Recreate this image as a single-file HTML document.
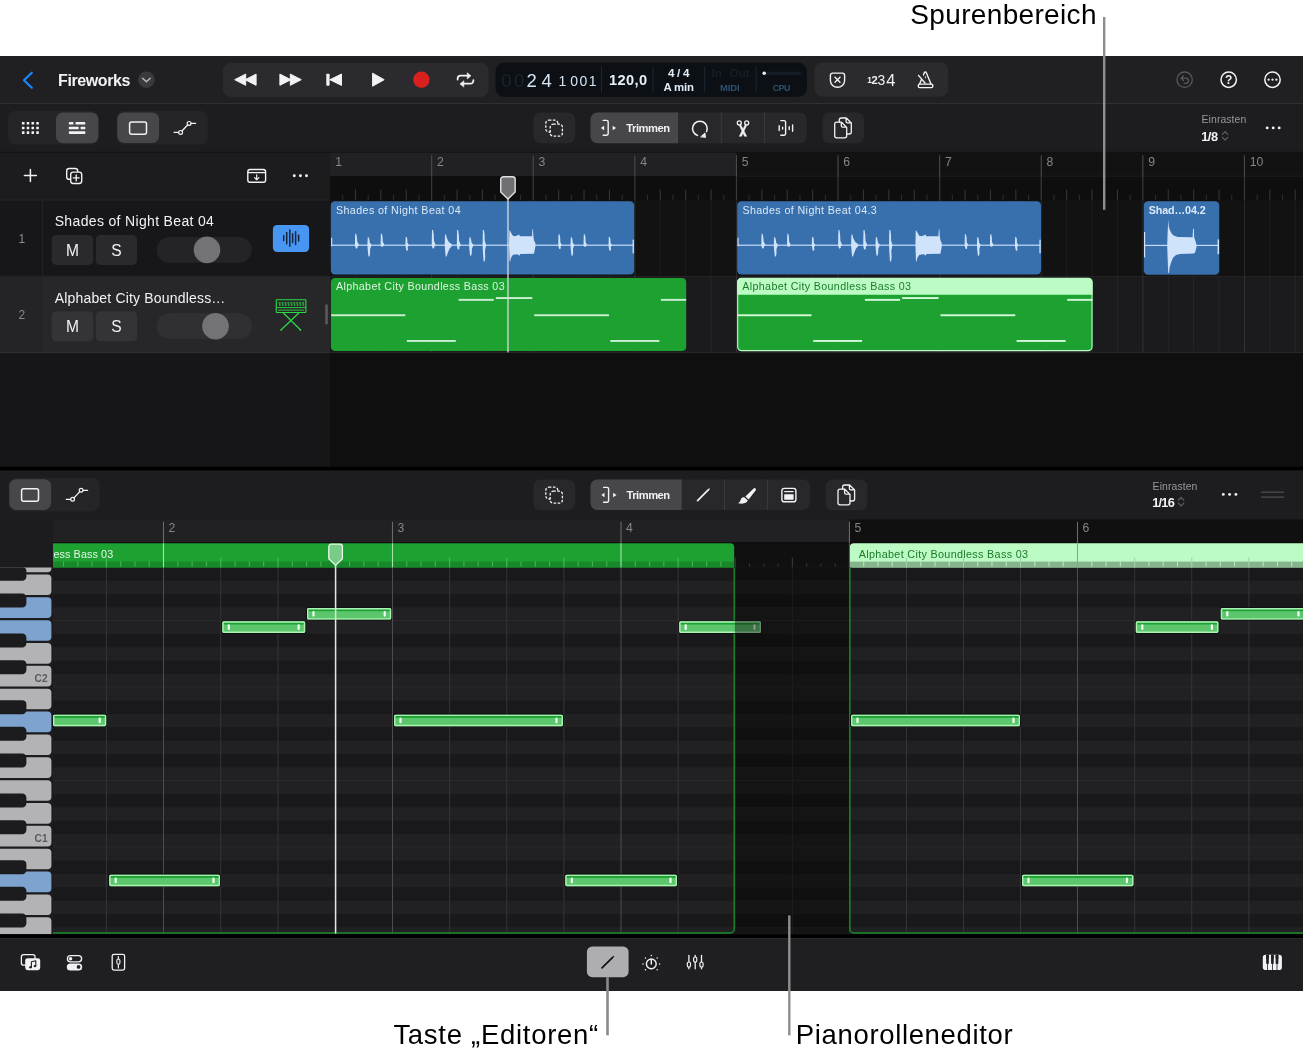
<!DOCTYPE html>
<html lang="de"><head><meta charset="utf-8"><title>Logic Pro – Spurenbereich und Pianorolleneditor</title>
<style>
html,body{margin:0;padding:0;background:#fff;}
body{width:1303px;height:1053px;overflow:hidden;font-family:"Liberation Sans", sans-serif;}
svg{display:block;font-family:"Liberation Sans", sans-serif;will-change:transform;}
text{white-space:pre;}
</style></head><body>
<svg width="1303" height="1053" viewBox="0 0 1303 1053">
<rect x="0.00" y="0.00" width="1303.00" height="1053.00" fill="#ffffff" />
<rect x="0.00" y="56.00" width="1303.00" height="935.00" fill="#1d1d1f" />
<rect x="0.00" y="56.00" width="1303.00" height="47.50" fill="#202023" />
<rect x="0.00" y="103.00" width="1303.00" height="1.00" fill="#303033" />
<text x="910.30" y="23.60" font-size="28" fill="#000" textLength="186.20" lengthAdjust="spacing" >Spurenbereich</text>
<path d="M31.8,72.7 L24.0,80.2 L31.8,87.7" fill="none" stroke="#1a86ff" stroke-width="2.2" stroke-linecap="round" stroke-linejoin="round"/>
<text x="58.00" y="85.50" font-size="16" fill="#f2f2f4" font-weight="700" textLength="72.50" lengthAdjust="spacing" >Fireworks</text>
<circle cx="146.40" cy="79.70" r="8.30" fill="#3a3a3e" />
<path d="M142.6,78.3 L146.4,81.8 L150.2,78.3" fill="none" stroke="#b8b8be" stroke-width="1.5" stroke-linecap="round" stroke-linejoin="round"/>
<rect x="223.00" y="63.00" width="265.50" height="34.00" fill="#2b2b2f" rx="8" />
<path d="M234.70,79.70 L245.70,74.10 L245.70,85.30 Z" fill="#f2f2f4" stroke="#f2f2f4" stroke-width="1" stroke-linejoin="round"/>
<path d="M245.10,79.70 L256.10,74.10 L256.10,85.30 Z" fill="#f2f2f4" stroke="#f2f2f4" stroke-width="1" stroke-linejoin="round"/>
<path d="M290.90,79.70 L279.90,74.10 L279.90,85.30 Z" fill="#f2f2f4" stroke="#f2f2f4" stroke-width="1" stroke-linejoin="round"/>
<path d="M301.30,79.70 L290.30,74.10 L290.30,85.30 Z" fill="#f2f2f4" stroke="#f2f2f4" stroke-width="1" stroke-linejoin="round"/>
<rect x="326.30" y="73.70" width="3.30" height="12.00" fill="#f2f2f4" rx="0.9" />
<path d="M329.90,79.70 L341.50,74.00 L341.50,85.40 Z" fill="#f2f2f4" stroke="#f2f2f4" stroke-width="1" stroke-linejoin="round"/>
<path d="M384.20,79.70 L372.60,73.20 L372.60,86.20 Z" fill="#f2f2f4" stroke="#f2f2f4" stroke-width="1" stroke-linejoin="round"/>
<circle cx="421.40" cy="79.70" r="8.20" fill="#d8201f" />
<path d="M457.6,79.6 v-0.8 a3.1,3.1 0 0 1 3.1,-3.1 h7" fill="none" stroke="#f2f2f4" stroke-width="1.75" stroke-linecap="round" stroke-linejoin="round"/>
<path d="M467.2,72.7 L471.0,75.8 L467.2,78.9 Z" fill="#f2f2f4" stroke="#f2f2f4" stroke-width="0.5" stroke-linejoin="round"/>
<path d="M473.4,80.1 v0.5 a3.1,3.1 0 0 1 -3.1,3.1 h-6.6" fill="none" stroke="#f2f2f4" stroke-width="1.75" stroke-linecap="round" stroke-linejoin="round"/>
<path d="M463.9,80.7 L459.9,83.9 L463.9,87.1 Z" fill="#f2f2f4" stroke="#f2f2f4" stroke-width="0.5" stroke-linejoin="round"/>
<rect x="495.50" y="62.60" width="311.50" height="34.20" fill="#0c1014" rx="9" />
<text x="501.30" y="86.60" font-size="18.5" fill="#1b232c" textLength="23.00" lengthAdjust="spacing" >00</text>
<text x="526.40" y="86.60" font-size="18.5" fill="#d4e4f4" >2</text>
<text x="541.60" y="86.60" font-size="18.5" fill="#d4e4f4" >4</text>
<text x="558.60" y="85.60" font-size="14" fill="#d4e4f4" >1</text>
<text x="570.30" y="85.60" font-size="14" fill="#d4e4f4" textLength="26.20" lengthAdjust="spacing" >001</text>
<rect x="601.00" y="66.50" width="1.00" height="26.00" fill="#1b2732" />
<text x="609.00" y="85.30" font-size="14.6" fill="#e6f0fa" font-weight="700" textLength="38.00" lengthAdjust="spacing" >120,0</text>
<rect x="652.50" y="66.50" width="1.00" height="26.00" fill="#1b2732" />
<text x="678.70" y="77.40" font-size="11.6" fill="#e0ecf8" font-weight="700" text-anchor="middle" textLength="21.60" lengthAdjust="spacing" >4 / 4</text>
<text x="678.70" y="91.30" font-size="11.4" fill="#e0ecf8" font-weight="700" text-anchor="middle" textLength="30.60" lengthAdjust="spacing" >A min</text>
<rect x="704.10" y="66.50" width="1.00" height="26.00" fill="#1b2732" />
<text x="711.60" y="77.40" font-size="11.6" fill="#151e27" font-weight="700" >In</text>
<text x="729.60" y="77.40" font-size="11.6" fill="#151e27" font-weight="700" textLength="20.00" lengthAdjust="spacing" >Out</text>
<text x="729.80" y="91.20" font-size="9.4" fill="#2c506e" font-weight="700" text-anchor="middle" textLength="19.40" lengthAdjust="spacing" >MIDI</text>
<rect x="755.70" y="66.50" width="1.00" height="26.00" fill="#1b2732" />
<rect x="762.30" y="71.70" width="38.80" height="3.20" fill="#161d25" rx="1.6" />
<circle cx="764.20" cy="73.30" r="1.70" fill="#e8f2fc" />
<text x="781.50" y="91.20" font-size="8.8" fill="#2c506e" font-weight="700" text-anchor="middle" textLength="17.60" lengthAdjust="spacing" >CPU</text>
<rect x="814.60" y="62.50" width="133.60" height="34.20" fill="#2b2b2f" rx="8" />
<path d="M832.6,73.1 h9.8 a2.2,2.2 0 0 1 2.2,2.2 v5.4 a7,7 0 0 1 -7.1,6.6 a7,7 0 0 1 -7.1,-6.6 v-5.4 a2.2,2.2 0 0 1 2.2,-2.2 z" fill="none" stroke="#f2f2f4" stroke-width="1.4" />
<path d="M835,77.2 l5,5 M840,77.2 l-5,5" fill="none" stroke="#f2f2f4" stroke-width="1.4" stroke-linecap="round"/>
<text x="867.30" y="82.80" font-size="8.4" fill="#f2f2f4" font-weight="700" >1</text>
<text x="871.50" y="84.00" font-size="11.2" fill="#f2f2f4" font-weight="700" textLength="5.60" lengthAdjust="spacing" >2</text>
<text x="877.40" y="84.90" font-size="13.8" fill="#f2f2f4" textLength="7.90" lengthAdjust="spacing" >3</text>
<text x="886.20" y="85.80" font-size="16.4" fill="#f2f2f4" textLength="9.80" lengthAdjust="spacing" >4</text>
<path d="M919.6,84.1 L924.3,72.7 a1.1,1.1 0 0 1 2,0 L931.0,84.1" fill="none" stroke="#f2f2f4" stroke-width="1.4" stroke-linejoin="round" stroke-linecap="round"/>
<rect x="918.30" y="84.10" width="14.50" height="3.50" fill="none" rx="1.4" stroke="#f2f2f4" stroke-width="1.4" />
<path d="M925.3,76.9 v3.4" fill="none" stroke="#f2f2f4" stroke-width="1.3" stroke-linecap="round"/>
<path d="M919.6,73.8 L926.4,82.2" fill="none" stroke="#2b2b2f" stroke-width="3.6" stroke-linecap="butt"/>
<path d="M918.5,75.4 L925.0,83.0" fill="none" stroke="#f2f2f4" stroke-width="1.4" stroke-linecap="round"/>
<circle cx="1184.60" cy="79.70" r="7.70" fill="none" stroke="#58585c" stroke-width="1.3" />
<path d="M1181.3,78.2 h4.6 a2.6,2.6 0 0 1 0,5.2 h-1.8 M1183.4,75.9 l-2.3,2.3 l2.3,2.3" fill="none" stroke="#58585c" stroke-width="1.3" stroke-linecap="round" stroke-linejoin="round"/>
<circle cx="1228.70" cy="79.70" r="7.70" fill="none" stroke="#f2f2f4" stroke-width="1.5" />
<text x="1228.70" y="84.10" font-size="12" fill="#f2f2f4" font-weight="700" text-anchor="middle" >?</text>
<circle cx="1272.50" cy="79.70" r="7.70" fill="none" stroke="#f2f2f4" stroke-width="1.5" />
<circle cx="1268.60" cy="79.70" r="1.15" fill="#f2f2f4" />
<circle cx="1272.50" cy="79.70" r="1.15" fill="#f2f2f4" />
<circle cx="1276.40" cy="79.70" r="1.15" fill="#f2f2f4" />
<rect x="7.90" y="110.80" width="91.00" height="33.70" fill="#252528" rx="8" />
<rect x="56.00" y="112.40" width="42.30" height="30.80" fill="#47474b" rx="7" />
<rect x="21.90" y="122.00" width="2.60" height="2.60" fill="#f2f2f4" rx="0.4" />
<rect x="26.68" y="122.00" width="2.60" height="2.60" fill="#f2f2f4" rx="0.4" />
<rect x="31.46" y="122.00" width="2.60" height="2.60" fill="#f2f2f4" rx="0.4" />
<rect x="36.24" y="122.00" width="2.60" height="2.60" fill="#f2f2f4" rx="0.4" />
<rect x="21.90" y="126.65" width="2.60" height="2.60" fill="#f2f2f4" rx="0.4" />
<rect x="26.68" y="126.65" width="2.60" height="2.60" fill="#f2f2f4" rx="0.4" />
<rect x="31.46" y="126.65" width="2.60" height="2.60" fill="#f2f2f4" rx="0.4" />
<rect x="36.24" y="126.65" width="2.60" height="2.60" fill="#f2f2f4" rx="0.4" />
<rect x="21.90" y="131.30" width="2.60" height="2.60" fill="#f2f2f4" rx="0.4" />
<rect x="26.68" y="131.30" width="2.60" height="2.60" fill="#f2f2f4" rx="0.4" />
<rect x="31.46" y="131.30" width="2.60" height="2.60" fill="#f2f2f4" rx="0.4" />
<rect x="36.24" y="131.30" width="2.60" height="2.60" fill="#f2f2f4" rx="0.4" />
<rect x="68.80" y="122.00" width="4.70" height="2.60" fill="#f2f2f4" rx="0.9" />
<rect x="75.50" y="122.00" width="9.80" height="2.60" fill="#f2f2f4" rx="0.9" />
<rect x="68.80" y="126.70" width="9.90" height="2.60" fill="#f2f2f4" rx="0.9" />
<rect x="80.60" y="126.70" width="4.70" height="2.60" fill="#f2f2f4" rx="0.9" />
<rect x="68.80" y="131.30" width="16.60" height="2.60" fill="#f2f2f4" rx="0.9" />
<rect x="116.50" y="110.85" width="91.20" height="33.70" fill="#252528" rx="8" />
<rect x="117.30" y="112.40" width="41.80" height="30.60" fill="#47474b" rx="7" />
<rect x="129.60" y="121.90" width="16.90" height="12.40" fill="none" rx="2.0" stroke="#f2f2f4" stroke-width="1.5" />
<path d="M174.2,132.40 H178.6 M182.0,131.00 L187.8,124.70 M191.1,123.40 H195.6" fill="none" stroke="#f2f2f4" stroke-width="1.3" stroke-linecap="round" stroke-linejoin="round"/>
<circle cx="180.60" cy="132.40" r="1.90" fill="none" stroke="#f2f2f4" stroke-width="1.2" />
<circle cx="189.10" cy="123.40" r="1.90" fill="none" stroke="#f2f2f4" stroke-width="1.2" />
<rect x="533.40" y="112.40" width="41.70" height="30.80" fill="#28282b" rx="7" />
<rect x="545.80" y="120.20" width="12.00" height="11.80" fill="none" rx="3" stroke="#f2f2f4" stroke-width="1.3" stroke-dasharray="2.6 1.5"/>
<rect x="550.20" y="124.20" width="12.20" height="12.00" fill="#28282b" rx="3" stroke="#f2f2f4" stroke-width="1.3" stroke-dasharray="2.6 1.5"/>
<rect x="590.50" y="112.40" width="216.30" height="30.80" fill="#28282b" rx="7" />
<path d="M597.5,112.40 H678.10 V143.20 H597.5 a7,7 0 0 1 -7,-7 V119.40 a7,7 0 0 1 7,-7 z" fill="#47474b" />
<path d="M603.20,120.40 h3.4 a1.6,1.6 0 0 1 1.6,1.6 v11.6 a1.6,1.6 0 0 1 -1.6,1.6 h-3.4" fill="none" stroke="#f2f2f4" stroke-width="1.4" stroke-linecap="round" stroke-linejoin="round"/>
<path d="M600.90,128.00 l3.2,-2.2 v4.4 z" fill="#f2f2f4" />
<path d="M616.10,128.00 l-3.4,-2.3 v4.6 z" fill="#f2f2f4" />
<text x="626.30" y="131.80" font-size="11.2" fill="#f2f2f4" font-weight="700" textLength="43.80" lengthAdjust="spacing" >Trimmen</text>
<rect x="720.80" y="112.40" width="1.00" height="30.80" fill="#3a3a3e" />
<rect x="763.90" y="112.40" width="1.00" height="30.80" fill="#3a3a3e" />
<path d="M697.5,135.4 A7.3,7.3 0 1 1 706.5,131.6" fill="none" stroke="#f2f2f4" stroke-width="1.5" stroke-linecap="round" stroke-linejoin="round"/>
<path d="M700.9,136.6 L705.0,132.9 L705.5,137.2 Z" fill="#f2f2f4" stroke="#f2f2f4" stroke-width="0.8" stroke-linecap="round" stroke-linejoin="round"/>
<circle cx="739.30" cy="122.90" r="2.00" fill="none" stroke="#f2f2f4" stroke-width="1.3" />
<circle cx="746.70" cy="122.90" r="2.00" fill="none" stroke="#f2f2f4" stroke-width="1.3" />
<path d="M745.3,124.6 L739.3,136.3 L741.5,136.3 L746.6,125.6 Z" fill="#f2f2f4" stroke="#f2f2f4" stroke-width="0.5" stroke-linecap="round" stroke-linejoin="round"/>
<path d="M740.7,124.6 L746.7,136.3 L744.5,136.3 L739.4,125.6 Z" fill="#f2f2f4" stroke="#f2f2f4" stroke-width="0.5" stroke-linecap="round" stroke-linejoin="round"/>
<path d="M780.8,120.6 h3.2 a1.6,1.6 0 0 1 1.6,1.6 v11.4 a1.6,1.6 0 0 1 -1.6,1.6 h-3.2" fill="none" stroke="#f2f2f4" stroke-width="1.4" stroke-linecap="round" stroke-linejoin="round"/>
<path d="M779.2,125.6 v5 M782.6,127.2 v1.8 M789.2,126.6 v3 M792.6,125 v6.2" fill="none" stroke="#f2f2f4" stroke-width="1.4" stroke-linecap="round" stroke-linejoin="round"/>
<rect x="822.40" y="112.40" width="41.70" height="30.80" fill="#28282b" rx="7" />
<path d="M839.30,122.20 v-2.2 a2,2 0 0 1 2,-2 h5 l5,5 v9 a2,2 0 0 1 -2,2 h-2.4 M846.10,118.20 v3.2 a1.4,1.4 0 0 0 1.4,1.4 h3.4" fill="none" stroke="#f2f2f4" stroke-width="1.3" stroke-linecap="round" stroke-linejoin="round"/>
<path d="M836.70,122.20 h4.8 l5.2,5.2 v8.4 a2,2 0 0 1 -2,2 h-8 a2,2 0 0 1 -2,-2 v-11.6 a2,2 0 0 1 2,-2 z M841.30,122.40 v3.4 a1.4,1.4 0 0 0 1.4,1.4 h3.6" fill="none" stroke="#f2f2f4" stroke-width="1.3" stroke-linecap="round" stroke-linejoin="round"/>
<text x="1201.60" y="123.00" font-size="10.4" fill="#98989d" textLength="44.60" lengthAdjust="spacing" >Einrasten</text>
<text x="1201.20" y="141.10" font-size="12.8" fill="#f2f2f4" font-weight="700" textLength="16.80" lengthAdjust="spacing" >1/8</text>
<path d="M1222.4,134.4 l2.7,-2.7 l2.7,2.7 M1222.4,137.4 l2.7,2.7 l2.7,-2.7" fill="none" stroke="#626267" stroke-width="1.2" stroke-linecap="round" stroke-linejoin="round"/>
<circle cx="1267.20" cy="127.90" r="1.45" fill="#f2f2f4" />
<circle cx="1273.20" cy="127.90" r="1.45" fill="#f2f2f4" />
<circle cx="1279.20" cy="127.90" r="1.45" fill="#f2f2f4" />
<rect x="0.00" y="152.00" width="1303.00" height="315.00" fill="#0f0f10" />
<rect x="0.00" y="152.00" width="330.00" height="48.00" fill="#1c1c1e" />
<rect x="0.00" y="151.80" width="1303.00" height="1.00" fill="#121213" />
<rect x="0.00" y="200.00" width="330.00" height="76.30" fill="#171719" />
<rect x="0.00" y="276.30" width="330.00" height="76.00" fill="#272729" />
<rect x="0.00" y="276.30" width="42.50" height="76.00" fill="#242426" />
<rect x="0.00" y="352.30" width="330.00" height="114.70" fill="#161618" />
<rect x="0.00" y="199.50" width="330.00" height="1.00" fill="#242426" />
<rect x="0.00" y="275.80" width="330.00" height="1.00" fill="#242426" />
<rect x="0.00" y="352.00" width="330.00" height="1.00" fill="#303032" />
<rect x="42.00" y="200.00" width="1.00" height="152.30" fill="#232325" />
<path d="M30.4,169.6 v12.0 M24.4,175.6 h12.0" fill="none" stroke="#f2f2f4" stroke-width="1.5" stroke-linecap="round"/>
<rect x="66.70" y="168.50" width="11.00" height="10.80" fill="none" rx="2.4" stroke="#f2f2f4" stroke-width="1.4" />
<rect x="70.70" y="172.10" width="11.00" height="11.40" fill="#1c1c1e" rx="2.4" stroke="#f2f2f4" stroke-width="1.4" />
<path d="M76.2,175.0 v5.8 M73.3,177.9 h5.8" fill="none" stroke="#f2f2f4" stroke-width="1.4" stroke-linecap="round"/>
<rect x="247.80" y="169.50" width="17.80" height="12.80" fill="none" rx="2.2" stroke="#f2f2f4" stroke-width="1.4" />
<rect x="247.80" y="171.95" width="17.80" height="1.30" fill="#f2f2f4" />
<path d="M256.7,174.8 v4.6 M254.5,177.6 l2.2,2.1 l2.2,-2.1" fill="none" stroke="#f2f2f4" stroke-width="1.2" stroke-linecap="round" stroke-linejoin="round"/>
<circle cx="294.30" cy="175.70" r="1.45" fill="#f2f2f4" />
<circle cx="300.40" cy="175.70" r="1.45" fill="#f2f2f4" />
<circle cx="306.50" cy="175.70" r="1.45" fill="#f2f2f4" />
<text x="21.80" y="242.70" font-size="12" fill="#8a8a8f" text-anchor="middle" >1</text>
<text x="54.70" y="226.30" font-size="14" fill="#f2f2f4" textLength="159.20" lengthAdjust="spacing" >Shades of Night Beat 04</text>
<rect x="51.70" y="234.90" width="41.60" height="30.00" fill="#2a2a2d" rx="4.5" />
<rect x="95.80" y="234.90" width="41.30" height="30.00" fill="#2a2a2d" rx="4.5" />
<text x="72.50" y="255.90" font-size="15.6" fill="#f2f2f4" text-anchor="middle" >M</text>
<text x="116.40" y="255.90" font-size="15.6" fill="#f2f2f4" text-anchor="middle" >S</text>
<rect x="156.60" y="237.00" width="95.20" height="25.80" fill="#242427" rx="12.9" />
<circle cx="207.00" cy="249.90" r="13.30" fill="#737377" />
<text x="21.80" y="319.00" font-size="12" fill="#8a8a8f" text-anchor="middle" >2</text>
<text x="54.70" y="302.60" font-size="14" fill="#f2f2f4" textLength="170.60" lengthAdjust="spacing" >Alphabet City Boundless…</text>
<rect x="51.70" y="311.20" width="41.60" height="30.00" fill="#343437" rx="4.5" />
<rect x="95.80" y="311.20" width="41.30" height="30.00" fill="#343437" rx="4.5" />
<text x="72.50" y="332.20" font-size="15.6" fill="#f2f2f4" text-anchor="middle" >M</text>
<text x="116.40" y="332.20" font-size="15.6" fill="#f2f2f4" text-anchor="middle" >S</text>
<rect x="156.60" y="313.30" width="95.20" height="25.80" fill="#303033" rx="12.9" />
<circle cx="215.50" cy="326.20" r="13.30" fill="#737377" />
<rect x="272.90" y="225.10" width="36.20" height="26.90" fill="#4797f2" rx="4.2" />
<line x1="283.70" y1="235.70" x2="283.70" y2="240.50" stroke="#14243c" stroke-width="1.5" stroke-linecap="round"/>
<line x1="286.70" y1="232.55" x2="286.70" y2="243.65" stroke="#14243c" stroke-width="1.5" stroke-linecap="round"/>
<line x1="289.80" y1="229.90" x2="289.80" y2="246.30" stroke="#14243c" stroke-width="1.5" stroke-linecap="round"/>
<line x1="292.60" y1="233.80" x2="292.60" y2="242.40" stroke="#14243c" stroke-width="1.5" stroke-linecap="round"/>
<line x1="295.60" y1="231.70" x2="295.60" y2="244.50" stroke="#14243c" stroke-width="1.5" stroke-linecap="round"/>
<line x1="298.60" y1="235.30" x2="298.60" y2="240.90" stroke="#14243c" stroke-width="1.5" stroke-linecap="round"/>
<rect x="276.30" y="299.70" width="29.60" height="12.80" fill="none" rx="0.6" stroke="#2adb49" stroke-width="1.1" />
<rect x="276.60" y="307.15" width="29.00" height="0.90" fill="#2adb49" />
<rect x="278.20" y="309.65" width="25.80" height="0.90" fill="#2adb49" />
<rect x="278.60" y="302.30" width="1.90" height="1.30" fill="#2adb49" />
<rect x="281.55" y="302.30" width="1.90" height="1.30" fill="#2adb49" />
<rect x="284.50" y="302.30" width="1.90" height="1.30" fill="#2adb49" />
<rect x="287.45" y="302.30" width="1.90" height="1.30" fill="#2adb49" />
<rect x="290.40" y="302.30" width="1.90" height="1.30" fill="#2adb49" />
<rect x="293.35" y="302.30" width="1.90" height="1.30" fill="#2adb49" />
<rect x="296.30" y="302.30" width="1.90" height="1.30" fill="#2adb49" />
<rect x="299.25" y="302.30" width="1.90" height="1.30" fill="#2adb49" />
<rect x="302.20" y="302.30" width="1.90" height="1.30" fill="#2adb49" />
<rect x="279.00" y="304.30" width="1.60" height="1.40" fill="#2adb49" />
<rect x="281.95" y="304.30" width="1.60" height="1.40" fill="#2adb49" />
<rect x="284.90" y="304.30" width="1.60" height="1.40" fill="#2adb49" />
<rect x="287.85" y="304.30" width="1.60" height="1.40" fill="#2adb49" />
<rect x="290.80" y="304.30" width="1.60" height="1.40" fill="#2adb49" />
<rect x="293.75" y="304.30" width="1.60" height="1.40" fill="#2adb49" />
<rect x="296.70" y="304.30" width="1.60" height="1.40" fill="#2adb49" />
<rect x="299.65" y="304.30" width="1.60" height="1.40" fill="#2adb49" />
<rect x="302.60" y="304.30" width="1.60" height="1.40" fill="#2adb49" />
<path d="M283.6,313.2 L300.4,329.8 M298.6,313.2 L281.2,329.8" fill="none" stroke="#2adb49" stroke-width="1.2" stroke-linecap="round"/>
<circle cx="300.40" cy="329.80" r="0.90" fill="#2adb49" />
<circle cx="281.20" cy="329.80" r="0.90" fill="#2adb49" />
<rect x="325.20" y="304.20" width="2.60" height="20.40" fill="#5a5a5e" rx="1.3" />
<rect x="330.00" y="152.60" width="973.00" height="23.60" fill="#121213" />
<rect x="330.00" y="152.60" width="406.45" height="23.60" fill="#212123" />
<rect x="330.00" y="176.20" width="973.00" height="24.00" fill="#0e0e0f" />
<rect x="736.45" y="175.70" width="566.55" height="1.00" fill="#1f1f21" />
<rect x="330.00" y="200.20" width="973.00" height="76.20" fill="#121213" />
<rect x="330.00" y="276.40" width="973.00" height="76.00" fill="#1b1b1d" />
<rect x="330.00" y="275.90" width="973.00" height="1.00" fill="#232325" />
<rect x="330.00" y="351.90" width="973.00" height="1.00" fill="#2a2a2c" />
<rect x="330.00" y="353.00" width="973.00" height="114.00" fill="#0f0f10" />
<rect x="354.95" y="200.20" width="1.00" height="76.20" fill="#1e1e20" />
<rect x="354.95" y="276.40" width="1.00" height="76.00" fill="#262628" />
<rect x="380.35" y="200.20" width="1.00" height="76.20" fill="#1e1e20" />
<rect x="380.35" y="276.40" width="1.00" height="76.00" fill="#262628" />
<rect x="405.75" y="200.20" width="1.00" height="76.20" fill="#1e1e20" />
<rect x="405.75" y="276.40" width="1.00" height="76.00" fill="#262628" />
<rect x="431.15" y="200.20" width="1.00" height="76.20" fill="#2c2c2e" />
<rect x="431.15" y="276.40" width="1.00" height="76.00" fill="#343436" />
<rect x="456.55" y="200.20" width="1.00" height="76.20" fill="#1e1e20" />
<rect x="456.55" y="276.40" width="1.00" height="76.00" fill="#262628" />
<rect x="481.95" y="200.20" width="1.00" height="76.20" fill="#1e1e20" />
<rect x="481.95" y="276.40" width="1.00" height="76.00" fill="#262628" />
<rect x="507.35" y="200.20" width="1.00" height="76.20" fill="#1e1e20" />
<rect x="507.35" y="276.40" width="1.00" height="76.00" fill="#262628" />
<rect x="532.75" y="200.20" width="1.00" height="76.20" fill="#2c2c2e" />
<rect x="532.75" y="276.40" width="1.00" height="76.00" fill="#343436" />
<rect x="558.15" y="200.20" width="1.00" height="76.20" fill="#1e1e20" />
<rect x="558.15" y="276.40" width="1.00" height="76.00" fill="#262628" />
<rect x="583.55" y="200.20" width="1.00" height="76.20" fill="#1e1e20" />
<rect x="583.55" y="276.40" width="1.00" height="76.00" fill="#262628" />
<rect x="608.95" y="200.20" width="1.00" height="76.20" fill="#1e1e20" />
<rect x="608.95" y="276.40" width="1.00" height="76.00" fill="#262628" />
<rect x="634.35" y="200.20" width="1.00" height="76.20" fill="#2c2c2e" />
<rect x="634.35" y="276.40" width="1.00" height="76.00" fill="#343436" />
<rect x="659.75" y="200.20" width="1.00" height="76.20" fill="#1e1e20" />
<rect x="659.75" y="276.40" width="1.00" height="76.00" fill="#262628" />
<rect x="685.15" y="200.20" width="1.00" height="76.20" fill="#1e1e20" />
<rect x="685.15" y="276.40" width="1.00" height="76.00" fill="#262628" />
<rect x="710.55" y="200.20" width="1.00" height="76.20" fill="#1e1e20" />
<rect x="710.55" y="276.40" width="1.00" height="76.00" fill="#262628" />
<rect x="735.95" y="200.20" width="1.00" height="76.20" fill="#2c2c2e" />
<rect x="735.95" y="276.40" width="1.00" height="76.00" fill="#343436" />
<rect x="761.35" y="200.20" width="1.00" height="76.20" fill="#1e1e20" />
<rect x="761.35" y="276.40" width="1.00" height="76.00" fill="#262628" />
<rect x="786.75" y="200.20" width="1.00" height="76.20" fill="#1e1e20" />
<rect x="786.75" y="276.40" width="1.00" height="76.00" fill="#262628" />
<rect x="812.15" y="200.20" width="1.00" height="76.20" fill="#1e1e20" />
<rect x="812.15" y="276.40" width="1.00" height="76.00" fill="#262628" />
<rect x="837.55" y="200.20" width="1.00" height="76.20" fill="#2c2c2e" />
<rect x="837.55" y="276.40" width="1.00" height="76.00" fill="#343436" />
<rect x="862.95" y="200.20" width="1.00" height="76.20" fill="#1e1e20" />
<rect x="862.95" y="276.40" width="1.00" height="76.00" fill="#262628" />
<rect x="888.35" y="200.20" width="1.00" height="76.20" fill="#1e1e20" />
<rect x="888.35" y="276.40" width="1.00" height="76.00" fill="#262628" />
<rect x="913.75" y="200.20" width="1.00" height="76.20" fill="#1e1e20" />
<rect x="913.75" y="276.40" width="1.00" height="76.00" fill="#262628" />
<rect x="939.15" y="200.20" width="1.00" height="76.20" fill="#2c2c2e" />
<rect x="939.15" y="276.40" width="1.00" height="76.00" fill="#343436" />
<rect x="964.55" y="200.20" width="1.00" height="76.20" fill="#1e1e20" />
<rect x="964.55" y="276.40" width="1.00" height="76.00" fill="#262628" />
<rect x="989.95" y="200.20" width="1.00" height="76.20" fill="#1e1e20" />
<rect x="989.95" y="276.40" width="1.00" height="76.00" fill="#262628" />
<rect x="1015.35" y="200.20" width="1.00" height="76.20" fill="#1e1e20" />
<rect x="1015.35" y="276.40" width="1.00" height="76.00" fill="#262628" />
<rect x="1040.75" y="200.20" width="1.00" height="76.20" fill="#2c2c2e" />
<rect x="1040.75" y="276.40" width="1.00" height="76.00" fill="#343436" />
<rect x="1066.15" y="200.20" width="1.00" height="76.20" fill="#1e1e20" />
<rect x="1066.15" y="276.40" width="1.00" height="76.00" fill="#262628" />
<rect x="1091.55" y="200.20" width="1.00" height="76.20" fill="#1e1e20" />
<rect x="1091.55" y="276.40" width="1.00" height="76.00" fill="#262628" />
<rect x="1116.95" y="200.20" width="1.00" height="76.20" fill="#1e1e20" />
<rect x="1116.95" y="276.40" width="1.00" height="76.00" fill="#262628" />
<rect x="1142.35" y="200.20" width="1.00" height="76.20" fill="#2c2c2e" />
<rect x="1142.35" y="276.40" width="1.00" height="76.00" fill="#343436" />
<rect x="1167.75" y="200.20" width="1.00" height="76.20" fill="#1e1e20" />
<rect x="1167.75" y="276.40" width="1.00" height="76.00" fill="#262628" />
<rect x="1193.15" y="200.20" width="1.00" height="76.20" fill="#1e1e20" />
<rect x="1193.15" y="276.40" width="1.00" height="76.00" fill="#262628" />
<rect x="1218.55" y="200.20" width="1.00" height="76.20" fill="#1e1e20" />
<rect x="1218.55" y="276.40" width="1.00" height="76.00" fill="#262628" />
<rect x="1243.95" y="200.20" width="1.00" height="76.20" fill="#2c2c2e" />
<rect x="1243.95" y="276.40" width="1.00" height="76.00" fill="#343436" />
<rect x="1269.35" y="200.20" width="1.00" height="76.20" fill="#1e1e20" />
<rect x="1269.35" y="276.40" width="1.00" height="76.00" fill="#262628" />
<rect x="1294.75" y="200.20" width="1.00" height="76.20" fill="#1e1e20" />
<rect x="1294.75" y="276.40" width="1.00" height="76.00" fill="#262628" />
<rect x="342.20" y="194.80" width="1.10" height="5.20" fill="#2b2b2e" />
<rect x="354.90" y="189.60" width="1.10" height="10.40" fill="#343437" />
<rect x="367.60" y="194.80" width="1.10" height="5.20" fill="#2b2b2e" />
<rect x="380.30" y="189.60" width="1.10" height="10.40" fill="#343437" />
<rect x="393.00" y="194.80" width="1.10" height="5.20" fill="#2b2b2e" />
<rect x="405.70" y="189.60" width="1.10" height="10.40" fill="#343437" />
<rect x="418.40" y="194.80" width="1.10" height="5.20" fill="#2b2b2e" />
<text x="335.35" y="165.60" font-size="12.2" fill="#85858a" >1</text>
<rect x="431.10" y="155.20" width="1.10" height="21.00" fill="#4a4a4e" />
<rect x="431.05" y="176.20" width="1.20" height="23.80" fill="#3a3a3d" />
<rect x="443.80" y="194.80" width="1.10" height="5.20" fill="#2b2b2e" />
<rect x="456.50" y="189.60" width="1.10" height="10.40" fill="#343437" />
<rect x="469.20" y="194.80" width="1.10" height="5.20" fill="#2b2b2e" />
<rect x="481.90" y="189.60" width="1.10" height="10.40" fill="#343437" />
<rect x="494.60" y="194.80" width="1.10" height="5.20" fill="#2b2b2e" />
<rect x="507.30" y="189.60" width="1.10" height="10.40" fill="#343437" />
<rect x="520.00" y="194.80" width="1.10" height="5.20" fill="#2b2b2e" />
<text x="436.95" y="165.60" font-size="12.2" fill="#85858a" >2</text>
<rect x="532.70" y="155.20" width="1.10" height="21.00" fill="#4a4a4e" />
<rect x="532.65" y="176.20" width="1.20" height="23.80" fill="#3a3a3d" />
<rect x="545.40" y="194.80" width="1.10" height="5.20" fill="#2b2b2e" />
<rect x="558.10" y="189.60" width="1.10" height="10.40" fill="#343437" />
<rect x="570.80" y="194.80" width="1.10" height="5.20" fill="#2b2b2e" />
<rect x="583.50" y="189.60" width="1.10" height="10.40" fill="#343437" />
<rect x="596.20" y="194.80" width="1.10" height="5.20" fill="#2b2b2e" />
<rect x="608.90" y="189.60" width="1.10" height="10.40" fill="#343437" />
<rect x="621.60" y="194.80" width="1.10" height="5.20" fill="#2b2b2e" />
<text x="538.55" y="165.60" font-size="12.2" fill="#85858a" >3</text>
<rect x="634.30" y="155.20" width="1.10" height="21.00" fill="#4a4a4e" />
<rect x="634.25" y="176.20" width="1.20" height="23.80" fill="#3a3a3d" />
<rect x="647.00" y="194.80" width="1.10" height="5.20" fill="#2b2b2e" />
<rect x="659.70" y="189.60" width="1.10" height="10.40" fill="#343437" />
<rect x="672.40" y="194.80" width="1.10" height="5.20" fill="#2b2b2e" />
<rect x="685.10" y="189.60" width="1.10" height="10.40" fill="#343437" />
<rect x="697.80" y="194.80" width="1.10" height="5.20" fill="#2b2b2e" />
<rect x="710.50" y="189.60" width="1.10" height="10.40" fill="#343437" />
<rect x="723.20" y="194.80" width="1.10" height="5.20" fill="#2b2b2e" />
<text x="640.15" y="165.60" font-size="12.2" fill="#85858a" >4</text>
<rect x="735.90" y="155.20" width="1.10" height="21.00" fill="#4a4a4e" />
<rect x="735.85" y="176.20" width="1.20" height="23.80" fill="#3a3a3d" />
<rect x="748.60" y="194.80" width="1.10" height="5.20" fill="#2b2b2e" />
<rect x="761.30" y="189.60" width="1.10" height="10.40" fill="#343437" />
<rect x="774.00" y="194.80" width="1.10" height="5.20" fill="#2b2b2e" />
<rect x="786.70" y="189.60" width="1.10" height="10.40" fill="#343437" />
<rect x="799.40" y="194.80" width="1.10" height="5.20" fill="#2b2b2e" />
<rect x="812.10" y="189.60" width="1.10" height="10.40" fill="#343437" />
<rect x="824.80" y="194.80" width="1.10" height="5.20" fill="#2b2b2e" />
<text x="741.75" y="165.60" font-size="12.2" fill="#85858a" >5</text>
<rect x="837.50" y="155.20" width="1.10" height="21.00" fill="#4a4a4e" />
<rect x="837.45" y="176.20" width="1.20" height="23.80" fill="#3a3a3d" />
<rect x="850.20" y="194.80" width="1.10" height="5.20" fill="#2b2b2e" />
<rect x="862.90" y="189.60" width="1.10" height="10.40" fill="#343437" />
<rect x="875.60" y="194.80" width="1.10" height="5.20" fill="#2b2b2e" />
<rect x="888.30" y="189.60" width="1.10" height="10.40" fill="#343437" />
<rect x="901.00" y="194.80" width="1.10" height="5.20" fill="#2b2b2e" />
<rect x="913.70" y="189.60" width="1.10" height="10.40" fill="#343437" />
<rect x="926.40" y="194.80" width="1.10" height="5.20" fill="#2b2b2e" />
<text x="843.35" y="165.60" font-size="12.2" fill="#85858a" >6</text>
<rect x="939.10" y="155.20" width="1.10" height="21.00" fill="#4a4a4e" />
<rect x="939.05" y="176.20" width="1.20" height="23.80" fill="#3a3a3d" />
<rect x="951.80" y="194.80" width="1.10" height="5.20" fill="#2b2b2e" />
<rect x="964.50" y="189.60" width="1.10" height="10.40" fill="#343437" />
<rect x="977.20" y="194.80" width="1.10" height="5.20" fill="#2b2b2e" />
<rect x="989.90" y="189.60" width="1.10" height="10.40" fill="#343437" />
<rect x="1002.60" y="194.80" width="1.10" height="5.20" fill="#2b2b2e" />
<rect x="1015.30" y="189.60" width="1.10" height="10.40" fill="#343437" />
<rect x="1028.00" y="194.80" width="1.10" height="5.20" fill="#2b2b2e" />
<text x="944.95" y="165.60" font-size="12.2" fill="#85858a" >7</text>
<rect x="1040.70" y="155.20" width="1.10" height="21.00" fill="#4a4a4e" />
<rect x="1040.65" y="176.20" width="1.20" height="23.80" fill="#3a3a3d" />
<rect x="1053.40" y="194.80" width="1.10" height="5.20" fill="#2b2b2e" />
<rect x="1066.10" y="189.60" width="1.10" height="10.40" fill="#343437" />
<rect x="1078.80" y="194.80" width="1.10" height="5.20" fill="#2b2b2e" />
<rect x="1091.50" y="189.60" width="1.10" height="10.40" fill="#343437" />
<rect x="1104.20" y="194.80" width="1.10" height="5.20" fill="#2b2b2e" />
<rect x="1116.90" y="189.60" width="1.10" height="10.40" fill="#343437" />
<rect x="1129.60" y="194.80" width="1.10" height="5.20" fill="#2b2b2e" />
<text x="1046.55" y="165.60" font-size="12.2" fill="#85858a" >8</text>
<rect x="1142.30" y="155.20" width="1.10" height="21.00" fill="#4a4a4e" />
<rect x="1142.25" y="176.20" width="1.20" height="23.80" fill="#3a3a3d" />
<rect x="1155.00" y="194.80" width="1.10" height="5.20" fill="#2b2b2e" />
<rect x="1167.70" y="189.60" width="1.10" height="10.40" fill="#343437" />
<rect x="1180.40" y="194.80" width="1.10" height="5.20" fill="#2b2b2e" />
<rect x="1193.10" y="189.60" width="1.10" height="10.40" fill="#343437" />
<rect x="1205.80" y="194.80" width="1.10" height="5.20" fill="#2b2b2e" />
<rect x="1218.50" y="189.60" width="1.10" height="10.40" fill="#343437" />
<rect x="1231.20" y="194.80" width="1.10" height="5.20" fill="#2b2b2e" />
<text x="1148.15" y="165.60" font-size="12.2" fill="#85858a" >9</text>
<rect x="1243.90" y="155.20" width="1.10" height="21.00" fill="#4a4a4e" />
<rect x="1243.85" y="176.20" width="1.20" height="23.80" fill="#3a3a3d" />
<rect x="1256.60" y="194.80" width="1.10" height="5.20" fill="#2b2b2e" />
<rect x="1269.30" y="189.60" width="1.10" height="10.40" fill="#343437" />
<rect x="1282.00" y="194.80" width="1.10" height="5.20" fill="#2b2b2e" />
<rect x="1294.70" y="189.60" width="1.10" height="10.40" fill="#343437" />
<text x="1249.75" y="165.60" font-size="12.2" fill="#85858a" >10</text>
<rect x="330.80" y="201.20" width="303.40" height="73.20" fill="#3870ad" rx="4.2" />
<text x="336.00" y="214.10" font-size="10.7" fill="#dbe8f7" textLength="124.60" lengthAdjust="spacing" >Shades of Night Beat 04</text>
<rect x="331.10" y="244.65" width="302.80" height="1.10" fill="#cfe3fb" />
<rect x="331.10" y="237.70" width="1.10" height="8.60" fill="#cfe3fb" />
<rect x="632.60" y="239.70" width="1.30" height="13.60" fill="#cfe3fb" />
<path d="M354.90,245.20 L355.20,233.70 L356.20,233.70 L356.90,237.15 L357.30,241.75 L358.90,244.60 L358.90,245.80 L357.62,246.22 L357.50,247.76 L356.90,248.40 L355.90,248.40 L355.30,246.80 Z" fill="#cfe3fb" />
<path d="M367.40,245.20 L367.70,237.30 L368.70,237.30 L369.40,239.67 L369.80,242.83 L371.40,244.60 L371.40,245.80 L370.12,248.82 L370.00,254.24 L369.40,256.50 L368.40,256.50 L367.80,250.85 Z" fill="#cfe3fb" />
<path d="M380.60,245.20 L380.90,233.70 L381.90,233.70 L382.60,237.15 L382.80,241.75 L384.20,244.60 L384.20,245.80 L383.08,245.68 L383.20,246.40 L382.60,246.70 L381.60,246.70 L381.00,245.95 Z" fill="#cfe3fb" />
<path d="M405.40,245.20 L405.70,236.90 L406.70,236.90 L407.40,239.39 L407.40,242.71 L408.60,244.60 L408.60,245.80 L407.64,246.99 L408.00,249.68 L407.40,250.80 L406.40,250.80 L405.80,248.00 Z" fill="#cfe3fb" />
<path d="M431.70,245.20 L432.00,230.00 L433.00,230.00 L433.70,234.56 L434.00,240.64 L435.50,244.60 L435.50,245.80 L434.30,246.22 L434.30,247.76 L433.70,248.40 L432.70,248.40 L432.10,246.80 Z" fill="#cfe3fb" />
<path d="M444.70,245.20 L445.00,234.40 L446.00,234.40 L446.70,237.64 L448.80,241.96 L452.10,244.60 L452.10,245.80 L449.46,248.82 L447.30,254.24 L446.70,256.50 L445.70,256.50 L445.10,250.85 Z" fill="#cfe3fb" />
<path d="M456.80,245.20 L457.10,230.00 L458.10,230.00 L458.80,234.56 L459.10,240.64 L460.60,244.60 L460.60,245.80 L459.40,246.61 L459.40,248.72 L458.80,249.60 L457.80,249.60 L457.20,247.40 Z" fill="#cfe3fb" />
<path d="M469.10,245.20 L469.40,237.30 L470.40,237.30 L471.10,239.67 L471.60,242.83 L473.30,244.60 L473.30,245.80 L471.94,248.59 L471.70,253.68 L471.10,255.80 L470.10,255.80 L469.50,250.50 Z" fill="#cfe3fb" />
<path d="M482.60,245.20 L482.90,230.00 L483.90,230.00 L484.60,234.56 L484.70,240.64 L486.00,244.60 L486.00,245.80 L484.96,250.38 L485.20,258.16 L484.60,261.40 L483.60,261.40 L483.00,253.30 Z" fill="#cfe3fb" />
<path d="M558.20,245.20 L558.50,234.20 L559.50,234.20 L560.20,237.50 L560.30,241.90 L561.60,244.60 L561.60,245.80 L560.56,246.38 L560.80,248.16 L560.20,248.90 L559.20,248.90 L558.60,247.05 Z" fill="#cfe3fb" />
<path d="M570.50,245.20 L570.80,237.30 L571.80,237.30 L572.50,239.67 L572.70,242.83 L574.10,244.60 L574.10,245.80 L572.98,248.59 L573.10,253.68 L572.50,255.80 L571.50,255.80 L570.90,250.50 Z" fill="#cfe3fb" />
<path d="M583.50,245.20 L583.80,234.20 L584.80,234.20 L585.50,237.50 L585.60,241.90 L586.90,244.60 L586.90,245.80 L585.86,245.68 L586.10,246.40 L585.50,246.70 L584.50,246.70 L583.90,245.95 Z" fill="#cfe3fb" />
<path d="M608.50,245.20 L608.80,236.90 L609.80,236.90 L610.50,239.39 L610.50,242.71 L611.70,244.60 L611.70,245.80 L610.74,246.99 L611.10,249.68 L610.50,250.80 L609.50,250.80 L608.90,248.00 Z" fill="#cfe3fb" />
<path d="M509.00,245.20 L509.40,230.00 L510.40,231.60 L512.80,235.80 L515.40,236.20 L519.20,234.60 L519.80,236.20 L532.00,236.20 L532.40,229.20 L533.00,229.20 L533.40,236.20 L534.00,240.20 L535.40,243.20 L535.40,246.60 L534.00,253.80 L520.00,254.00 L519.40,255.80 L517.40,254.20 L513.00,254.80 L511.00,257.80 L510.20,261.40 L509.60,261.40 Z" fill="#cfe3fb" />
<rect x="737.20" y="201.20" width="303.80" height="73.20" fill="#3870ad" rx="4.2" />
<text x="742.40" y="214.10" font-size="10.7" fill="#dbe8f7" textLength="134.40" lengthAdjust="spacing" >Shades of Night Beat 04.3</text>
<rect x="737.50" y="244.65" width="303.20" height="1.10" fill="#cfe3fb" />
<rect x="737.50" y="237.70" width="1.10" height="8.60" fill="#cfe3fb" />
<rect x="1039.40" y="239.70" width="1.30" height="13.60" fill="#cfe3fb" />
<path d="M761.30,245.20 L761.60,233.70 L762.60,233.70 L763.30,237.15 L763.70,241.75 L765.30,244.60 L765.30,245.80 L764.02,246.22 L763.90,247.76 L763.30,248.40 L762.30,248.40 L761.70,246.80 Z" fill="#cfe3fb" />
<path d="M773.80,245.20 L774.10,237.30 L775.10,237.30 L775.80,239.67 L776.20,242.83 L777.80,244.60 L777.80,245.80 L776.52,248.82 L776.40,254.24 L775.80,256.50 L774.80,256.50 L774.20,250.85 Z" fill="#cfe3fb" />
<path d="M787.00,245.20 L787.30,233.70 L788.30,233.70 L789.00,237.15 L789.20,241.75 L790.60,244.60 L790.60,245.80 L789.48,245.68 L789.60,246.40 L789.00,246.70 L788.00,246.70 L787.40,245.95 Z" fill="#cfe3fb" />
<path d="M811.80,245.20 L812.10,236.90 L813.10,236.90 L813.80,239.39 L813.80,242.71 L815.00,244.60 L815.00,245.80 L814.04,246.99 L814.40,249.68 L813.80,250.80 L812.80,250.80 L812.20,248.00 Z" fill="#cfe3fb" />
<path d="M838.10,245.20 L838.40,230.00 L839.40,230.00 L840.10,234.56 L840.40,240.64 L841.90,244.60 L841.90,245.80 L840.70,246.22 L840.70,247.76 L840.10,248.40 L839.10,248.40 L838.50,246.80 Z" fill="#cfe3fb" />
<path d="M851.10,245.20 L851.40,234.40 L852.40,234.40 L853.10,237.64 L855.20,241.96 L858.50,244.60 L858.50,245.80 L855.86,248.82 L853.70,254.24 L853.10,256.50 L852.10,256.50 L851.50,250.85 Z" fill="#cfe3fb" />
<path d="M863.20,245.20 L863.50,230.00 L864.50,230.00 L865.20,234.56 L865.50,240.64 L867.00,244.60 L867.00,245.80 L865.80,246.61 L865.80,248.72 L865.20,249.60 L864.20,249.60 L863.60,247.40 Z" fill="#cfe3fb" />
<path d="M875.50,245.20 L875.80,237.30 L876.80,237.30 L877.50,239.67 L878.00,242.83 L879.70,244.60 L879.70,245.80 L878.34,248.59 L878.10,253.68 L877.50,255.80 L876.50,255.80 L875.90,250.50 Z" fill="#cfe3fb" />
<path d="M889.00,245.20 L889.30,230.00 L890.30,230.00 L891.00,234.56 L891.10,240.64 L892.40,244.60 L892.40,245.80 L891.36,250.38 L891.60,258.16 L891.00,261.40 L890.00,261.40 L889.40,253.30 Z" fill="#cfe3fb" />
<path d="M964.60,245.20 L964.90,234.20 L965.90,234.20 L966.60,237.50 L966.70,241.90 L968.00,244.60 L968.00,245.80 L966.96,246.38 L967.20,248.16 L966.60,248.90 L965.60,248.90 L965.00,247.05 Z" fill="#cfe3fb" />
<path d="M976.90,245.20 L977.20,237.30 L978.20,237.30 L978.90,239.67 L979.10,242.83 L980.50,244.60 L980.50,245.80 L979.38,248.59 L979.50,253.68 L978.90,255.80 L977.90,255.80 L977.30,250.50 Z" fill="#cfe3fb" />
<path d="M989.90,245.20 L990.20,234.20 L991.20,234.20 L991.90,237.50 L992.00,241.90 L993.30,244.60 L993.30,245.80 L992.26,245.68 L992.50,246.40 L991.90,246.70 L990.90,246.70 L990.30,245.95 Z" fill="#cfe3fb" />
<path d="M1014.90,245.20 L1015.20,236.90 L1016.20,236.90 L1016.90,239.39 L1016.90,242.71 L1018.10,244.60 L1018.10,245.80 L1017.14,246.99 L1017.50,249.68 L1016.90,250.80 L1015.90,250.80 L1015.30,248.00 Z" fill="#cfe3fb" />
<path d="M915.40,245.20 L915.80,230.00 L916.80,231.60 L919.20,235.80 L921.80,236.20 L925.60,234.60 L926.20,236.20 L938.40,236.20 L938.80,229.20 L939.40,229.20 L939.80,236.20 L940.40,240.20 L941.80,243.20 L941.80,246.60 L940.40,253.80 L926.40,254.00 L925.80,255.80 L923.80,254.20 L919.40,254.80 L917.40,257.80 L916.60,261.40 L916.00,261.40 Z" fill="#cfe3fb" />
<rect x="1143.80" y="201.20" width="75.40" height="73.60" fill="#3870ad" rx="4.2" />
<text x="1148.80" y="214.20" font-size="10.7" fill="#dbe8f7" font-weight="700" textLength="56.80" lengthAdjust="spacing" >Shad…04.2</text>
<rect x="1144.20" y="244.85" width="74.80" height="1.10" fill="#cfe3fb" />
<rect x="1144.00" y="232.00" width="1.20" height="25.40" fill="#cfe3fb" />
<rect x="1217.60" y="239.40" width="1.50" height="14.80" fill="#cfe3fb" />
<path d="M1167.20,245.40 L1167.60,233.40 L1168.20,219.40 L1168.80,226.40 L1170.00,230.40 L1172.00,234.00 L1174.00,235.80 L1178.00,237.00 L1192.60,237.20 L1193.00,228.80 L1193.80,228.80 L1194.20,237.40 L1195.60,241.40 L1196.40,244.40 L1196.40,247.40 L1195.00,252.80 L1193.60,253.60 L1180.00,254.00 L1176.00,255.00 L1173.00,257.80 L1171.00,262.80 L1169.60,267.40 L1169.00,273.00 L1168.20,273.00 L1167.60,257.40 Z" fill="#cfe3fb" />
<rect x="330.90" y="277.90" width="355.30" height="73.20" fill="#1da131" rx="4.2" />
<text x="336.00" y="290.00" font-size="10.7" fill="#dff5e2" textLength="168.60" lengthAdjust="spacing" >Alphabet City Boundless Bass 03</text>
<rect x="331.20" y="314.30" width="74.08" height="1.90" fill="#cdeed2" />
<rect x="406.90" y="340.00" width="48.88" height="1.90" fill="#cdeed2" />
<rect x="458.61" y="298.90" width="35.16" height="1.90" fill="#cdeed2" />
<rect x="495.80" y="297.10" width="36.48" height="1.90" fill="#cdeed2" />
<rect x="534.20" y="314.30" width="74.78" height="1.90" fill="#cdeed2" />
<rect x="610.30" y="340.00" width="49.08" height="1.90" fill="#cdeed2" />
<rect x="660.90" y="298.90" width="25.30" height="1.90" fill="#cdeed2" />
<rect x="737.20" y="277.90" width="355.30" height="73.20" fill="#1da131" rx="4.2" />
<path d="M737.20,294.8 V282.1 a4.2,4.2 0 0 1 4.2,-4.2 H1088.30 a4.2,4.2 0 0 1 4.2,4.2 V294.8 Z" fill="#bcfcc4" />
<rect x="737.70" y="278.40" width="354.30" height="72.20" fill="none" rx="3.8" stroke="#bcfcc4" stroke-width="1.1" />
<text x="742.30" y="290.00" font-size="10.7" fill="#1b7a2a" textLength="168.60" lengthAdjust="spacing" >Alphabet City Boundless Bass 03</text>
<rect x="737.50" y="314.30" width="74.08" height="1.90" fill="#d6f8da" />
<rect x="813.20" y="340.00" width="48.88" height="1.90" fill="#d6f8da" />
<rect x="864.91" y="298.90" width="35.16" height="1.90" fill="#d6f8da" />
<rect x="902.10" y="297.10" width="36.48" height="1.90" fill="#d6f8da" />
<rect x="940.50" y="314.30" width="74.78" height="1.90" fill="#d6f8da" />
<rect x="1016.60" y="340.00" width="49.08" height="1.90" fill="#d6f8da" />
<rect x="1067.20" y="298.90" width="25.30" height="1.90" fill="#d6f8da" />
<rect x="506.95" y="197.00" width="2.00" height="155.40" fill="#dcdcde" opacity="0.66"/>
<path d="M503.35,176.7 h9.2 a2.6,2.6 0 0 1 2.6,2.6 v12.6 l-7.2,7.0 l-7.2,-7.0 v-12.6 a2.6,2.6 0 0 1 2.6,-2.6 z" fill="#707072" stroke="#e2e2e4" stroke-width="1.4" stroke-linejoin="round"/>
<rect x="0.00" y="466.80" width="1303.00" height="3.80" fill="#000" />
<rect x="0.00" y="470.60" width="1303.00" height="48.60" fill="#1d1d1f" />
<g transform="translate(-108,0)">
<rect x="116.50" y="477.75" width="91.20" height="33.70" fill="#252528" rx="8" />
<rect x="117.30" y="479.30" width="41.80" height="30.60" fill="#47474b" rx="7" />
<rect x="129.60" y="488.80" width="16.90" height="12.40" fill="none" rx="2.0" stroke="#f2f2f4" stroke-width="1.5" />
<path d="M174.2,499.30 H178.6 M182.0,497.90 L187.8,491.60 M191.1,490.30 H195.6" fill="none" stroke="#f2f2f4" stroke-width="1.3" stroke-linecap="round" stroke-linejoin="round"/>
<circle cx="180.60" cy="499.30" r="1.90" fill="none" stroke="#f2f2f4" stroke-width="1.2" />
<circle cx="189.10" cy="490.30" r="1.90" fill="none" stroke="#f2f2f4" stroke-width="1.2" />
</g>
<rect x="533.40" y="479.40" width="41.70" height="30.80" fill="#28282b" rx="7" />
<rect x="545.80" y="487.20" width="12.00" height="11.80" fill="none" rx="3" stroke="#f2f2f4" stroke-width="1.3" stroke-dasharray="2.6 1.5"/>
<rect x="550.20" y="491.20" width="12.20" height="12.00" fill="#28282b" rx="3" stroke="#f2f2f4" stroke-width="1.3" stroke-dasharray="2.6 1.5"/>
<rect x="590.50" y="479.50" width="219.70" height="30.60" fill="#28282b" rx="7" />
<path d="M597.5,479.50 H681.7 V510.10 H597.5 a7,7 0 0 1 -7,-7 V486.50 a7,7 0 0 1 7,-7 z" fill="#47474b" />
<path d="M603.60,487.40 h3.4 a1.6,1.6 0 0 1 1.6,1.6 v11.6 a1.6,1.6 0 0 1 -1.6,1.6 h-3.4" fill="none" stroke="#f2f2f4" stroke-width="1.4" stroke-linecap="round" stroke-linejoin="round"/>
<path d="M601.30,495.00 l3.2,-2.2 v4.4 z" fill="#f2f2f4" />
<path d="M616.50,495.00 l-3.4,-2.3 v4.6 z" fill="#f2f2f4" />
<text x="626.40" y="498.80" font-size="11.2" fill="#f2f2f4" font-weight="700" textLength="43.80" lengthAdjust="spacing" >Trimmen</text>
<rect x="724.00" y="479.50" width="1.00" height="30.60" fill="#3a3a3e" />
<rect x="767.10" y="479.50" width="1.00" height="30.60" fill="#3a3a3e" />
<path d="M697.6,500.6 L708.0,490.2" fill="none" stroke="#f2f2f4" stroke-width="1.7" stroke-linecap="round"/>
<path d="M708.4,489.8 L709.2,489.0" fill="none" stroke="#f2f2f4" stroke-width="1.2" stroke-linecap="round"/>
<path d="M745.4,496.6 L753.6,488.6 a1.3,1.3 0 0 1 2,1.8 L748.6,499.6 Z" fill="#f2f2f4" />
<path d="M744.6,497.6 l3.2,3 c-1,3 -5,3.6 -9.8,2.6 c2.4,-1 2.2,-2.6 3,-4.2 c0.8,-1.4 2.4,-2 3.6,-1.4 z" fill="#f2f2f4" />
<rect x="781.90" y="488.40" width="14.00" height="13.40" fill="none" rx="2.4" stroke="#f2f2f4" stroke-width="1.4" />
<rect x="784.20" y="494.20" width="9.40" height="5.60" fill="#f2f2f4" rx="0.6" />
<rect x="784.20" y="491.00" width="9.40" height="1.20" fill="#f2f2f4" />
<rect x="825.70" y="479.40" width="41.70" height="30.80" fill="#28282b" rx="7" />
<path d="M842.60,489.20 v-2.2 a2,2 0 0 1 2,-2 h5 l5,5 v9 a2,2 0 0 1 -2,2 h-2.4 M849.40,485.20 v3.2 a1.4,1.4 0 0 0 1.4,1.4 h3.4" fill="none" stroke="#f2f2f4" stroke-width="1.3" stroke-linecap="round" stroke-linejoin="round"/>
<path d="M840.00,489.20 h4.8 l5.2,5.2 v8.4 a2,2 0 0 1 -2,2 h-8 a2,2 0 0 1 -2,-2 v-11.6 a2,2 0 0 1 2,-2 z M844.60,489.40 v3.4 a1.4,1.4 0 0 0 1.4,1.4 h3.6" fill="none" stroke="#f2f2f4" stroke-width="1.3" stroke-linecap="round" stroke-linejoin="round"/>
<text x="1152.60" y="490.20" font-size="10.4" fill="#98989d" textLength="44.80" lengthAdjust="spacing" >Einrasten</text>
<text x="1152.20" y="506.90" font-size="12.8" fill="#f2f2f4" font-weight="700" textLength="22.60" lengthAdjust="spacing" >1/16</text>
<path d="M1178.4,500.2 l2.7,-2.7 l2.7,2.7 M1178.4,503.2 l2.7,2.7 l2.7,-2.7" fill="none" stroke="#626267" stroke-width="1.2" stroke-linecap="round" stroke-linejoin="round"/>
<circle cx="1223.30" cy="494.40" r="1.45" fill="#f2f2f4" />
<circle cx="1229.60" cy="494.40" r="1.45" fill="#f2f2f4" />
<circle cx="1235.90" cy="494.40" r="1.45" fill="#f2f2f4" />
<rect x="1261.00" y="491.50" width="23.20" height="1.40" fill="#48484c" />
<rect x="1261.00" y="496.40" width="23.20" height="1.40" fill="#48484c" />
<rect x="0.00" y="519.40" width="53.00" height="48.00" fill="#1c1c1e" />
<rect x="53.00" y="519.40" width="796.45" height="23.40" fill="#212123" />
<rect x="849.45" y="519.40" width="453.55" height="23.40" fill="#101011" />
<rect x="53.00" y="542.80" width="1250.00" height="24.60" fill="#101011" />
<rect x="53.00" y="542.40" width="1250.00" height="1.00" fill="#0a0a0b" />
<rect x="53.00" y="567.40" width="1250.00" height="366.20" fill="#212123" />
<rect x="53.00" y="567.40" width="1250.00" height="13.33" fill="#19191b" />
<rect x="734.20" y="567.40" width="115.70" height="13.33" fill="#0f0f10" />
<rect x="53.00" y="580.73" width="1250.00" height="13.33" fill="#212123" />
<rect x="734.20" y="580.73" width="115.70" height="13.33" fill="#141415" />
<rect x="53.00" y="594.07" width="1250.00" height="13.33" fill="#19191b" />
<rect x="734.20" y="594.07" width="115.70" height="13.33" fill="#0f0f10" />
<rect x="53.00" y="607.40" width="1250.00" height="13.33" fill="#212123" />
<rect x="734.20" y="607.40" width="115.70" height="13.33" fill="#141415" />
<rect x="53.00" y="620.23" width="1250.00" height="1.00" fill="#313133" />
<rect x="734.20" y="620.23" width="115.70" height="1.00" fill="#1d1d1f" />
<rect x="53.00" y="620.73" width="1250.00" height="13.33" fill="#212123" />
<rect x="734.20" y="620.73" width="115.70" height="13.33" fill="#141415" />
<rect x="53.00" y="634.07" width="1250.00" height="13.33" fill="#19191b" />
<rect x="734.20" y="634.07" width="115.70" height="13.33" fill="#0f0f10" />
<rect x="53.00" y="647.40" width="1250.00" height="13.33" fill="#212123" />
<rect x="734.20" y="647.40" width="115.70" height="13.33" fill="#141415" />
<rect x="53.00" y="660.73" width="1250.00" height="13.33" fill="#19191b" />
<rect x="734.20" y="660.73" width="115.70" height="13.33" fill="#0f0f10" />
<rect x="53.00" y="674.07" width="1250.00" height="13.33" fill="#212123" />
<rect x="734.20" y="674.07" width="115.70" height="13.33" fill="#141415" />
<rect x="53.00" y="686.90" width="1250.00" height="1.00" fill="#313133" />
<rect x="734.20" y="686.90" width="115.70" height="1.00" fill="#1d1d1f" />
<rect x="53.00" y="687.40" width="1250.00" height="13.33" fill="#212123" />
<rect x="734.20" y="687.40" width="115.70" height="13.33" fill="#141415" />
<rect x="53.00" y="700.73" width="1250.00" height="13.33" fill="#19191b" />
<rect x="734.20" y="700.73" width="115.70" height="13.33" fill="#0f0f10" />
<rect x="53.00" y="714.07" width="1250.00" height="13.33" fill="#212123" />
<rect x="734.20" y="714.07" width="115.70" height="13.33" fill="#141415" />
<rect x="53.00" y="727.40" width="1250.00" height="13.33" fill="#19191b" />
<rect x="734.20" y="727.40" width="115.70" height="13.33" fill="#0f0f10" />
<rect x="53.00" y="740.73" width="1250.00" height="13.33" fill="#212123" />
<rect x="734.20" y="740.73" width="115.70" height="13.33" fill="#141415" />
<rect x="53.00" y="754.07" width="1250.00" height="13.33" fill="#19191b" />
<rect x="734.20" y="754.07" width="115.70" height="13.33" fill="#0f0f10" />
<rect x="53.00" y="767.40" width="1250.00" height="13.33" fill="#212123" />
<rect x="734.20" y="767.40" width="115.70" height="13.33" fill="#141415" />
<rect x="53.00" y="780.23" width="1250.00" height="1.00" fill="#313133" />
<rect x="734.20" y="780.23" width="115.70" height="1.00" fill="#1d1d1f" />
<rect x="53.00" y="780.73" width="1250.00" height="13.33" fill="#212123" />
<rect x="734.20" y="780.73" width="115.70" height="13.33" fill="#141415" />
<rect x="53.00" y="794.07" width="1250.00" height="13.33" fill="#19191b" />
<rect x="734.20" y="794.07" width="115.70" height="13.33" fill="#0f0f10" />
<rect x="53.00" y="807.40" width="1250.00" height="13.33" fill="#212123" />
<rect x="734.20" y="807.40" width="115.70" height="13.33" fill="#141415" />
<rect x="53.00" y="820.73" width="1250.00" height="13.33" fill="#19191b" />
<rect x="734.20" y="820.73" width="115.70" height="13.33" fill="#0f0f10" />
<rect x="53.00" y="834.07" width="1250.00" height="13.33" fill="#212123" />
<rect x="734.20" y="834.07" width="115.70" height="13.33" fill="#141415" />
<rect x="53.00" y="846.90" width="1250.00" height="1.00" fill="#313133" />
<rect x="734.20" y="846.90" width="115.70" height="1.00" fill="#1d1d1f" />
<rect x="53.00" y="847.40" width="1250.00" height="13.33" fill="#212123" />
<rect x="734.20" y="847.40" width="115.70" height="13.33" fill="#141415" />
<rect x="53.00" y="860.73" width="1250.00" height="13.33" fill="#19191b" />
<rect x="734.20" y="860.73" width="115.70" height="13.33" fill="#0f0f10" />
<rect x="53.00" y="874.07" width="1250.00" height="13.33" fill="#212123" />
<rect x="734.20" y="874.07" width="115.70" height="13.33" fill="#141415" />
<rect x="53.00" y="887.40" width="1250.00" height="13.33" fill="#19191b" />
<rect x="734.20" y="887.40" width="115.70" height="13.33" fill="#0f0f10" />
<rect x="53.00" y="900.73" width="1250.00" height="13.33" fill="#212123" />
<rect x="734.20" y="900.73" width="115.70" height="13.33" fill="#141415" />
<rect x="53.00" y="914.07" width="1250.00" height="13.33" fill="#19191b" />
<rect x="734.20" y="914.07" width="115.70" height="13.33" fill="#0f0f10" />
<rect x="53.00" y="927.40" width="1250.00" height="6.20" fill="#212123" />
<rect x="734.20" y="927.40" width="115.70" height="6.20" fill="#141415" />
<rect x="53.00" y="940.23" width="1250.00" height="1.00" fill="#313133" />
<rect x="734.20" y="940.23" width="115.70" height="1.00" fill="#1d1d1f" />
<rect x="105.88" y="567.40" width="1.00" height="366.20" fill="#353537" />
<rect x="163.00" y="567.40" width="1.00" height="366.20" fill="#4d4d50" />
<rect x="220.25" y="567.40" width="1.00" height="366.20" fill="#353537" />
<rect x="277.50" y="567.40" width="1.00" height="366.20" fill="#353537" />
<rect x="334.75" y="567.40" width="1.00" height="366.20" fill="#353537" />
<rect x="392.00" y="567.40" width="1.00" height="366.20" fill="#4d4d50" />
<rect x="449.12" y="567.40" width="1.00" height="366.20" fill="#353537" />
<rect x="506.25" y="567.40" width="1.00" height="366.20" fill="#353537" />
<rect x="563.38" y="567.40" width="1.00" height="366.20" fill="#353537" />
<rect x="620.50" y="567.40" width="1.00" height="366.20" fill="#4d4d50" />
<rect x="677.61" y="567.40" width="1.00" height="366.20" fill="#353537" />
<rect x="734.73" y="567.40" width="1.00" height="366.20" fill="#1e1e20" />
<rect x="791.84" y="567.40" width="1.00" height="366.20" fill="#1e1e20" />
<rect x="848.95" y="567.40" width="1.00" height="366.20" fill="#2c2c2e" />
<rect x="905.96" y="567.40" width="1.00" height="366.20" fill="#353537" />
<rect x="962.98" y="567.40" width="1.00" height="366.20" fill="#353537" />
<rect x="1019.99" y="567.40" width="1.00" height="366.20" fill="#353537" />
<rect x="1077.00" y="567.40" width="1.00" height="366.20" fill="#4d4d50" />
<rect x="1134.12" y="567.40" width="1.00" height="366.20" fill="#353537" />
<rect x="1191.25" y="567.40" width="1.00" height="366.20" fill="#353537" />
<rect x="1248.38" y="567.40" width="1.00" height="366.20" fill="#353537" />
<path d="M53.0,543.3 H730.20 a4,4 0 0 1 4,4 V567.4 H53.0 Z" fill="#1da131" />
<rect x="53.00" y="561.60" width="681.20" height="5.80" fill="#17892a" />
<rect x="849.90" y="543.30" width="458.10" height="24.10" fill="#bcfcc4" rx="4" />
<rect x="849.90" y="561.60" width="453.10" height="5.80" fill="#85b48d" />
<rect x="849.90" y="563.00" width="4.00" height="4.40" fill="#85b48d" />
<rect x="62.98" y="561.40" width="1.10" height="5.20" fill="#46b257" />
<rect x="77.26" y="561.40" width="1.10" height="5.20" fill="#46b257" />
<rect x="91.54" y="561.40" width="1.10" height="5.20" fill="#46b257" />
<rect x="105.83" y="557.60" width="1.10" height="9.80" fill="#49b85a" />
<rect x="120.11" y="561.40" width="1.10" height="5.20" fill="#46b257" />
<rect x="134.39" y="561.40" width="1.10" height="5.20" fill="#46b257" />
<rect x="148.67" y="561.40" width="1.10" height="5.20" fill="#46b257" />
<rect x="162.95" y="521.80" width="1.10" height="21.20" fill="#6a6a6e" />
<rect x="162.95" y="543.30" width="1.10" height="24.10" fill="#a2e4ab" />
<rect x="177.26" y="561.40" width="1.10" height="5.20" fill="#46b257" />
<rect x="191.57" y="561.40" width="1.10" height="5.20" fill="#46b257" />
<rect x="205.89" y="561.40" width="1.10" height="5.20" fill="#46b257" />
<rect x="220.20" y="557.60" width="1.10" height="9.80" fill="#49b85a" />
<rect x="234.51" y="561.40" width="1.10" height="5.20" fill="#46b257" />
<rect x="248.82" y="561.40" width="1.10" height="5.20" fill="#46b257" />
<rect x="263.14" y="561.40" width="1.10" height="5.20" fill="#46b257" />
<rect x="277.45" y="557.60" width="1.10" height="9.80" fill="#49b85a" />
<rect x="291.76" y="561.40" width="1.10" height="5.20" fill="#46b257" />
<rect x="306.07" y="561.40" width="1.10" height="5.20" fill="#46b257" />
<rect x="320.39" y="561.40" width="1.10" height="5.20" fill="#46b257" />
<rect x="334.70" y="557.60" width="1.10" height="9.80" fill="#49b85a" />
<rect x="349.01" y="561.40" width="1.10" height="5.20" fill="#46b257" />
<rect x="363.32" y="561.40" width="1.10" height="5.20" fill="#46b257" />
<rect x="377.64" y="561.40" width="1.10" height="5.20" fill="#46b257" />
<rect x="391.95" y="521.80" width="1.10" height="21.20" fill="#6a6a6e" />
<rect x="391.95" y="543.30" width="1.10" height="24.10" fill="#a2e4ab" />
<rect x="406.23" y="561.40" width="1.10" height="5.20" fill="#46b257" />
<rect x="420.51" y="561.40" width="1.10" height="5.20" fill="#46b257" />
<rect x="434.79" y="561.40" width="1.10" height="5.20" fill="#46b257" />
<rect x="449.07" y="557.60" width="1.10" height="9.80" fill="#49b85a" />
<rect x="463.36" y="561.40" width="1.10" height="5.20" fill="#46b257" />
<rect x="477.64" y="561.40" width="1.10" height="5.20" fill="#46b257" />
<rect x="491.92" y="561.40" width="1.10" height="5.20" fill="#46b257" />
<rect x="506.20" y="557.60" width="1.10" height="9.80" fill="#49b85a" />
<rect x="520.48" y="561.40" width="1.10" height="5.20" fill="#46b257" />
<rect x="534.76" y="561.40" width="1.10" height="5.20" fill="#46b257" />
<rect x="549.04" y="561.40" width="1.10" height="5.20" fill="#46b257" />
<rect x="563.33" y="557.60" width="1.10" height="9.80" fill="#49b85a" />
<rect x="577.61" y="561.40" width="1.10" height="5.20" fill="#46b257" />
<rect x="591.89" y="561.40" width="1.10" height="5.20" fill="#46b257" />
<rect x="606.17" y="561.40" width="1.10" height="5.20" fill="#46b257" />
<rect x="620.45" y="521.80" width="1.10" height="21.20" fill="#6a6a6e" />
<rect x="620.45" y="543.30" width="1.10" height="24.10" fill="#a2e4ab" />
<rect x="634.73" y="561.40" width="1.10" height="5.20" fill="#46b257" />
<rect x="649.01" y="561.40" width="1.10" height="5.20" fill="#46b257" />
<rect x="663.28" y="561.40" width="1.10" height="5.20" fill="#46b257" />
<rect x="677.56" y="557.60" width="1.10" height="9.80" fill="#49b85a" />
<rect x="691.84" y="561.40" width="1.10" height="5.20" fill="#46b257" />
<rect x="706.12" y="561.40" width="1.10" height="5.20" fill="#46b257" />
<rect x="720.40" y="561.40" width="1.10" height="5.20" fill="#46b257" />
<rect x="734.68" y="557.60" width="1.10" height="9.80" fill="#3a3a3c" />
<rect x="748.95" y="563.40" width="1.10" height="3.20" fill="#333335" />
<rect x="763.23" y="563.40" width="1.10" height="3.20" fill="#333335" />
<rect x="777.51" y="563.40" width="1.10" height="3.20" fill="#333335" />
<rect x="791.79" y="557.60" width="1.10" height="9.80" fill="#3a3a3c" />
<rect x="806.07" y="563.40" width="1.10" height="3.20" fill="#333335" />
<rect x="820.34" y="563.40" width="1.10" height="3.20" fill="#333335" />
<rect x="834.62" y="563.40" width="1.10" height="3.20" fill="#333335" />
<rect x="848.90" y="521.80" width="1.10" height="21.20" fill="#6a6a6e" />
<rect x="848.90" y="543.30" width="1.10" height="24.10" fill="#5a5a5e" />
<rect x="863.15" y="561.40" width="1.10" height="5.20" fill="#b4e6bb" />
<rect x="877.41" y="561.40" width="1.10" height="5.20" fill="#b4e6bb" />
<rect x="891.66" y="561.40" width="1.10" height="5.20" fill="#b4e6bb" />
<rect x="905.91" y="557.60" width="1.10" height="9.80" fill="#9fd6a7" />
<rect x="920.17" y="561.40" width="1.10" height="5.20" fill="#b4e6bb" />
<rect x="934.42" y="561.40" width="1.10" height="5.20" fill="#b4e6bb" />
<rect x="948.67" y="561.40" width="1.10" height="5.20" fill="#b4e6bb" />
<rect x="962.93" y="557.60" width="1.10" height="9.80" fill="#9fd6a7" />
<rect x="977.18" y="561.40" width="1.10" height="5.20" fill="#b4e6bb" />
<rect x="991.43" y="561.40" width="1.10" height="5.20" fill="#b4e6bb" />
<rect x="1005.68" y="561.40" width="1.10" height="5.20" fill="#b4e6bb" />
<rect x="1019.94" y="557.60" width="1.10" height="9.80" fill="#9fd6a7" />
<rect x="1034.19" y="561.40" width="1.10" height="5.20" fill="#b4e6bb" />
<rect x="1048.44" y="561.40" width="1.10" height="5.20" fill="#b4e6bb" />
<rect x="1062.70" y="561.40" width="1.10" height="5.20" fill="#b4e6bb" />
<rect x="1076.95" y="521.80" width="1.10" height="21.20" fill="#6a6a6e" />
<rect x="1076.95" y="543.30" width="1.10" height="24.10" fill="#84a88a" />
<rect x="1091.23" y="561.40" width="1.10" height="5.20" fill="#b4e6bb" />
<rect x="1105.51" y="561.40" width="1.10" height="5.20" fill="#b4e6bb" />
<rect x="1119.79" y="561.40" width="1.10" height="5.20" fill="#b4e6bb" />
<rect x="1134.08" y="557.60" width="1.10" height="9.80" fill="#9fd6a7" />
<rect x="1148.36" y="561.40" width="1.10" height="5.20" fill="#b4e6bb" />
<rect x="1162.64" y="561.40" width="1.10" height="5.20" fill="#b4e6bb" />
<rect x="1176.92" y="561.40" width="1.10" height="5.20" fill="#b4e6bb" />
<rect x="1191.20" y="557.60" width="1.10" height="9.80" fill="#9fd6a7" />
<rect x="1205.48" y="561.40" width="1.10" height="5.20" fill="#b4e6bb" />
<rect x="1219.76" y="561.40" width="1.10" height="5.20" fill="#b4e6bb" />
<rect x="1234.04" y="561.40" width="1.10" height="5.20" fill="#b4e6bb" />
<rect x="1248.33" y="557.60" width="1.10" height="9.80" fill="#9fd6a7" />
<rect x="1262.61" y="561.40" width="1.10" height="5.20" fill="#b4e6bb" />
<rect x="1276.89" y="561.40" width="1.10" height="5.20" fill="#b4e6bb" />
<rect x="1291.17" y="561.40" width="1.10" height="5.20" fill="#b4e6bb" />
<text x="168.50" y="532.10" font-size="12.2" fill="#85858a" >2</text>
<text x="397.50" y="532.10" font-size="12.2" fill="#85858a" >3</text>
<text x="626.00" y="532.10" font-size="12.2" fill="#85858a" >4</text>
<text x="854.45" y="532.10" font-size="12.2" fill="#85858a" >5</text>
<text x="1082.50" y="532.10" font-size="12.2" fill="#85858a" >6</text>
<text x="53.40" y="557.70" font-size="10.8" fill="#e4f6e7" textLength="59.80" lengthAdjust="spacing" >ess Bass 03</text>
<text x="858.80" y="557.50" font-size="10.8" fill="#1b7a2a" textLength="169.20" lengthAdjust="spacing" >Alphabet City Boundless Bass 03</text>
<path d="M734.20,567.4 V929.00 a4,4 0 0 1 -4,4 H53.0" fill="none" stroke="#1c8a2c" stroke-width="1.4" />
<path d="M849.90,567.4 V929.00 a4,4 0 0 0 4,4 H1303" fill="none" stroke="#1c8a2c" stroke-width="1.4" />
<rect x="52.20" y="713.87" width="54.80" height="13.20" fill="#0c0c0d" rx="1.6" />
<rect x="53.00" y="714.67" width="53.20" height="11.60" fill="#5bc66c" rx="1.2" />
<rect x="54.00" y="715.67" width="51.20" height="2.20" fill="#1fa234" />
<rect x="53.70" y="715.37" width="51.80" height="10.20" fill="none" rx="1" stroke="#abf2b4" stroke-width="1.4" />
<rect x="98.60" y="717.57" width="2.20" height="5.80" fill="#f2fff4" rx="1.1" />
<rect x="108.40" y="873.87" width="112.40" height="13.20" fill="#0c0c0d" rx="1.6" />
<rect x="109.20" y="874.67" width="110.80" height="11.60" fill="#5bc66c" rx="1.2" />
<rect x="110.20" y="875.67" width="108.80" height="2.20" fill="#1fa234" />
<rect x="109.90" y="875.37" width="109.40" height="10.20" fill="none" rx="1" stroke="#abf2b4" stroke-width="1.4" />
<rect x="114.60" y="877.57" width="2.20" height="5.80" fill="#f2fff4" rx="1.1" />
<rect x="212.40" y="877.57" width="2.20" height="5.80" fill="#f2fff4" rx="1.1" />
<rect x="221.50" y="620.53" width="84.50" height="13.20" fill="#0c0c0d" rx="1.6" />
<rect x="222.30" y="621.33" width="82.90" height="11.60" fill="#5bc66c" rx="1.2" />
<rect x="223.30" y="622.33" width="80.90" height="2.20" fill="#1fa234" />
<rect x="223.00" y="622.03" width="81.50" height="10.20" fill="none" rx="1" stroke="#abf2b4" stroke-width="1.4" />
<rect x="227.70" y="624.23" width="2.20" height="5.80" fill="#f2fff4" rx="1.1" />
<rect x="297.60" y="624.23" width="2.20" height="5.80" fill="#f2fff4" rx="1.1" />
<rect x="306.20" y="607.20" width="85.80" height="13.20" fill="#0c0c0d" rx="1.6" />
<rect x="307.00" y="608.00" width="84.20" height="11.60" fill="#5bc66c" rx="1.2" />
<rect x="308.00" y="609.00" width="82.20" height="2.20" fill="#1fa234" />
<rect x="307.70" y="608.70" width="82.80" height="10.20" fill="none" rx="1" stroke="#abf2b4" stroke-width="1.4" />
<rect x="312.40" y="610.90" width="2.20" height="5.80" fill="#f2fff4" rx="1.1" />
<rect x="383.60" y="610.90" width="2.20" height="5.80" fill="#f2fff4" rx="1.1" />
<rect x="393.20" y="713.87" width="170.60" height="13.20" fill="#0c0c0d" rx="1.6" />
<rect x="394.00" y="714.67" width="169.00" height="11.60" fill="#5bc66c" rx="1.2" />
<rect x="395.00" y="715.67" width="167.00" height="2.20" fill="#1fa234" />
<rect x="394.70" y="715.37" width="167.60" height="10.20" fill="none" rx="1" stroke="#abf2b4" stroke-width="1.4" />
<rect x="399.40" y="717.57" width="2.20" height="5.80" fill="#f2fff4" rx="1.1" />
<rect x="555.40" y="717.57" width="2.20" height="5.80" fill="#f2fff4" rx="1.1" />
<rect x="564.50" y="873.87" width="113.30" height="13.20" fill="#0c0c0d" rx="1.6" />
<rect x="565.30" y="874.67" width="111.70" height="11.60" fill="#5bc66c" rx="1.2" />
<rect x="566.30" y="875.67" width="109.70" height="2.20" fill="#1fa234" />
<rect x="566.00" y="875.37" width="110.30" height="10.20" fill="none" rx="1" stroke="#abf2b4" stroke-width="1.4" />
<rect x="570.70" y="877.57" width="2.20" height="5.80" fill="#f2fff4" rx="1.1" />
<rect x="669.40" y="877.57" width="2.20" height="5.80" fill="#f2fff4" rx="1.1" />
<rect x="678.40" y="620.53" width="83.40" height="13.20" fill="#0c0c0d" rx="1.6" />
<rect x="679.20" y="621.33" width="81.80" height="11.60" fill="#5bc66c" rx="1.2" />
<rect x="680.20" y="622.33" width="79.80" height="2.20" fill="#1fa234" />
<rect x="679.90" y="622.03" width="80.40" height="10.20" fill="none" rx="1" stroke="#abf2b4" stroke-width="1.4" />
<rect x="684.60" y="624.23" width="2.20" height="5.80" fill="#f2fff4" rx="1.1" />
<rect x="753.40" y="624.23" width="2.20" height="5.80" fill="#f2fff4" rx="1.1" />
<rect x="734.90" y="620.53" width="26.90" height="13.20" fill="#101011" opacity="0.45"/>
<rect x="850.20" y="713.87" width="170.60" height="13.20" fill="#0c0c0d" rx="1.6" />
<rect x="851.00" y="714.67" width="169.00" height="11.60" fill="#5bc66c" rx="1.2" />
<rect x="852.00" y="715.67" width="167.00" height="2.20" fill="#1fa234" />
<rect x="851.70" y="715.37" width="167.60" height="10.20" fill="none" rx="1" stroke="#abf2b4" stroke-width="1.4" />
<rect x="856.40" y="717.57" width="2.20" height="5.80" fill="#f2fff4" rx="1.1" />
<rect x="1012.40" y="717.57" width="2.20" height="5.80" fill="#f2fff4" rx="1.1" />
<rect x="1021.20" y="873.87" width="113.00" height="13.20" fill="#0c0c0d" rx="1.6" />
<rect x="1022.00" y="874.67" width="111.40" height="11.60" fill="#5bc66c" rx="1.2" />
<rect x="1023.00" y="875.67" width="109.40" height="2.20" fill="#1fa234" />
<rect x="1022.70" y="875.37" width="110.00" height="10.20" fill="none" rx="1" stroke="#abf2b4" stroke-width="1.4" />
<rect x="1027.40" y="877.57" width="2.20" height="5.80" fill="#f2fff4" rx="1.1" />
<rect x="1125.80" y="877.57" width="2.20" height="5.80" fill="#f2fff4" rx="1.1" />
<rect x="1135.00" y="620.53" width="84.20" height="13.20" fill="#0c0c0d" rx="1.6" />
<rect x="1135.80" y="621.33" width="82.60" height="11.60" fill="#5bc66c" rx="1.2" />
<rect x="1136.80" y="622.33" width="80.60" height="2.20" fill="#1fa234" />
<rect x="1136.50" y="622.03" width="81.20" height="10.20" fill="none" rx="1" stroke="#abf2b4" stroke-width="1.4" />
<rect x="1141.20" y="624.23" width="2.20" height="5.80" fill="#f2fff4" rx="1.1" />
<rect x="1210.80" y="624.23" width="2.20" height="5.80" fill="#f2fff4" rx="1.1" />
<rect x="1220.00" y="607.20" width="85.80" height="13.20" fill="#0c0c0d" rx="1.6" />
<rect x="1220.80" y="608.00" width="84.20" height="11.60" fill="#5bc66c" rx="1.2" />
<rect x="1221.80" y="609.00" width="82.20" height="2.20" fill="#1fa234" />
<rect x="1221.50" y="608.70" width="82.80" height="10.20" fill="none" rx="1" stroke="#abf2b4" stroke-width="1.4" />
<rect x="1226.20" y="610.90" width="2.20" height="5.80" fill="#f2fff4" rx="1.1" />
<rect x="1297.40" y="610.90" width="2.20" height="5.80" fill="#f2fff4" rx="1.1" />
<rect x="334.85" y="560.00" width="1.50" height="373.60" fill="#e4e4e6" />
<path d="M331.2,544.2 h8.8 a2.4,2.4 0 0 1 2.4,2.4 v12.2 l-6.8,6.6 l-6.8,-6.6 v-12.2 a2.4,2.4 0 0 1 2.4,-2.4 z" fill="#79cc86" stroke="#e9f8ec" stroke-width="1.3" stroke-linejoin="round"/>
<rect x="0.00" y="567.40" width="53.00" height="367.20" fill="#1c1c1e" />
<clipPath id="kbclip"><rect x="0" y="567.4" width="53.0" height="366.80"/></clipPath><g clip-path="url(#kbclip)">
<path d="M0,917.27 H47.40 a4,4 0 0 1 4,4 V933.93 a4,4 0 0 1 -4,4 H0 Z" fill="#b3b3b5" />
<path d="M0,894.41 H47.40 a4,4 0 0 1 4,4 V911.07 a4,4 0 0 1 -4,4 H0 Z" fill="#b3b3b5" />
<path d="M0,871.56 H47.40 a4,4 0 0 1 4,4 V888.21 a4,4 0 0 1 -4,4 H0 Z" fill="#7ea3cf" />
<path d="M0,848.70 H47.40 a4,4 0 0 1 4,4 V865.36 a4,4 0 0 1 -4,4 H0 Z" fill="#b3b3b5" />
<path d="M0,914.27 H22.20 a3.4,3.4 0 0 1 3.4,3.4 V923.30 a3.4,3.4 0 0 1 -3.4,3.4 H0 Z" fill="#1c1c1e" stroke="#1c1c1e" stroke-width="1.6" />
<path d="M0,887.60 H22.20 a3.4,3.4 0 0 1 3.4,3.4 V896.63 a3.4,3.4 0 0 1 -3.4,3.4 H0 Z" fill="#1c1c1e" stroke="#1c1c1e" stroke-width="1.6" />
<path d="M0,860.93 H22.20 a3.4,3.4 0 0 1 3.4,3.4 V869.97 a3.4,3.4 0 0 1 -3.4,3.4 H0 Z" fill="#1c1c1e" stroke="#1c1c1e" stroke-width="1.6" />
<path d="M0,825.84 H47.40 a4,4 0 0 1 4,4 V842.50 a4,4 0 0 1 -4,4 H0 Z" fill="#b3b3b5" />
<text x="47.60" y="841.70" font-size="10.2" fill="#5a5a5e" font-weight="700" text-anchor="end" >C1</text>
<path d="M0,802.99 H47.40 a4,4 0 0 1 4,4 V819.64 a4,4 0 0 1 -4,4 H0 Z" fill="#b3b3b5" />
<path d="M0,780.13 H47.40 a4,4 0 0 1 4,4 V796.79 a4,4 0 0 1 -4,4 H0 Z" fill="#b3b3b5" />
<path d="M0,757.27 H47.40 a4,4 0 0 1 4,4 V773.93 a4,4 0 0 1 -4,4 H0 Z" fill="#b3b3b5" />
<path d="M0,734.41 H47.40 a4,4 0 0 1 4,4 V751.07 a4,4 0 0 1 -4,4 H0 Z" fill="#b3b3b5" />
<path d="M0,711.56 H47.40 a4,4 0 0 1 4,4 V728.21 a4,4 0 0 1 -4,4 H0 Z" fill="#7ea3cf" />
<path d="M0,688.70 H47.40 a4,4 0 0 1 4,4 V705.36 a4,4 0 0 1 -4,4 H0 Z" fill="#b3b3b5" />
<path d="M0,820.93 H22.20 a3.4,3.4 0 0 1 3.4,3.4 V829.97 a3.4,3.4 0 0 1 -3.4,3.4 H0 Z" fill="#1c1c1e" stroke="#1c1c1e" stroke-width="1.6" />
<path d="M0,794.27 H22.20 a3.4,3.4 0 0 1 3.4,3.4 V803.30 a3.4,3.4 0 0 1 -3.4,3.4 H0 Z" fill="#1c1c1e" stroke="#1c1c1e" stroke-width="1.6" />
<path d="M0,754.27 H22.20 a3.4,3.4 0 0 1 3.4,3.4 V763.30 a3.4,3.4 0 0 1 -3.4,3.4 H0 Z" fill="#1c1c1e" stroke="#1c1c1e" stroke-width="1.6" />
<path d="M0,727.60 H22.20 a3.4,3.4 0 0 1 3.4,3.4 V736.63 a3.4,3.4 0 0 1 -3.4,3.4 H0 Z" fill="#1c1c1e" stroke="#1c1c1e" stroke-width="1.6" />
<path d="M0,700.93 H22.20 a3.4,3.4 0 0 1 3.4,3.4 V709.97 a3.4,3.4 0 0 1 -3.4,3.4 H0 Z" fill="#1c1c1e" stroke="#1c1c1e" stroke-width="1.6" />
<path d="M0,665.84 H47.40 a4,4 0 0 1 4,4 V682.50 a4,4 0 0 1 -4,4 H0 Z" fill="#b3b3b5" />
<text x="47.60" y="681.70" font-size="10.2" fill="#5a5a5e" font-weight="700" text-anchor="end" >C2</text>
<path d="M0,642.99 H47.40 a4,4 0 0 1 4,4 V659.64 a4,4 0 0 1 -4,4 H0 Z" fill="#b3b3b5" />
<path d="M0,620.13 H47.40 a4,4 0 0 1 4,4 V636.79 a4,4 0 0 1 -4,4 H0 Z" fill="#7ea3cf" />
<path d="M0,597.27 H47.40 a4,4 0 0 1 4,4 V613.93 a4,4 0 0 1 -4,4 H0 Z" fill="#7ea3cf" />
<path d="M0,574.41 H47.40 a4,4 0 0 1 4,4 V591.07 a4,4 0 0 1 -4,4 H0 Z" fill="#b3b3b5" />
<path d="M0,551.56 H47.40 a4,4 0 0 1 4,4 V568.21 a4,4 0 0 1 -4,4 H0 Z" fill="#b3b3b5" />
<path d="M0,660.93 H22.20 a3.4,3.4 0 0 1 3.4,3.4 V669.97 a3.4,3.4 0 0 1 -3.4,3.4 H0 Z" fill="#1c1c1e" stroke="#1c1c1e" stroke-width="1.6" />
<path d="M0,634.27 H22.20 a3.4,3.4 0 0 1 3.4,3.4 V643.30 a3.4,3.4 0 0 1 -3.4,3.4 H0 Z" fill="#1c1c1e" stroke="#1c1c1e" stroke-width="1.6" />
<path d="M0,594.27 H22.20 a3.4,3.4 0 0 1 3.4,3.4 V603.30 a3.4,3.4 0 0 1 -3.4,3.4 H0 Z" fill="#1c1c1e" stroke="#1c1c1e" stroke-width="1.6" />
<path d="M0,567.60 H22.20 a3.4,3.4 0 0 1 3.4,3.4 V576.63 a3.4,3.4 0 0 1 -3.4,3.4 H0 Z" fill="#1c1c1e" stroke="#1c1c1e" stroke-width="1.6" />
</g>
<rect x="0.00" y="934.20" width="1303.00" height="4.20" fill="#000" />
<rect x="0.00" y="938.20" width="1303.00" height="52.80" fill="#1f1f21" />
<rect x="0.00" y="938.00" width="1303.00" height="1.00" fill="#2a2a2c" />
<rect x="21.40" y="954.60" width="13.60" height="10.60" fill="none" rx="2.2" stroke="#f2f2f4" stroke-width="1.3" />
<rect x="25.20" y="958.20" width="15.00" height="12.00" fill="#f2f2f4" rx="2.4" />
<path d="M31.4,967.2 v-5.4 l4.4,-1 v5.2" fill="none" stroke="#1f1f21" stroke-width="1.1" stroke-linecap="round" stroke-linejoin="round"/>
<circle cx="30.50" cy="967.30" r="1.20" fill="#1f1f21" />
<circle cx="34.90" cy="966.10" r="1.20" fill="#1f1f21" />
<rect x="67.40" y="955.60" width="14.20" height="6.20" fill="none" rx="3.1" stroke="#f2f2f4" stroke-width="1.3" />
<circle cx="70.60" cy="958.70" r="1.70" fill="#f2f2f4" />
<rect x="66.80" y="963.40" width="15.40" height="7.00" fill="#f2f2f4" rx="3.5" />
<circle cx="78.60" cy="966.90" r="1.90" fill="#1f1f21" />
<rect x="112.20" y="954.30" width="12.40" height="15.80" fill="none" rx="1.8" stroke="#f2f2f4" stroke-width="1.3" />
<path d="M118.4,956.6 v11.4" fill="none" stroke="#f2f2f4" stroke-width="1.2" stroke-linecap="round" stroke-linejoin="round"/>
<rect x="116.90" y="959.00" width="3.00" height="5.20" fill="#1f1f21" rx="1.5" stroke="#f2f2f4" stroke-width="1.1" />
<rect x="586.90" y="946.50" width="41.70" height="30.70" fill="#aeaeb2" rx="5.5" />
<path d="M602.0,967.8 L612.4,957.6" fill="none" stroke="#111" stroke-width="1.7" stroke-linecap="round"/>
<path d="M612.9,957.1 L613.6,956.4" fill="none" stroke="#111" stroke-width="1.2" stroke-linecap="round"/>
<circle cx="651.30" cy="963.90" r="4.90" fill="none" stroke="#f2f2f4" stroke-width="1.4" />
<path d="M651.3,959.6 v4.4" fill="none" stroke="#f2f2f4" stroke-width="1.4" stroke-linecap="round" stroke-linejoin="round"/>
<circle cx="651.30" cy="955.60" r="0.75" fill="#f2f2f4" />
<circle cx="657.17" cy="958.03" r="0.75" fill="#f2f2f4" />
<circle cx="645.43" cy="958.03" r="0.75" fill="#f2f2f4" />
<circle cx="659.60" cy="963.90" r="0.75" fill="#f2f2f4" />
<circle cx="643.00" cy="963.90" r="0.75" fill="#f2f2f4" />
<circle cx="657.17" cy="969.77" r="0.75" fill="#f2f2f4" />
<circle cx="645.43" cy="969.77" r="0.75" fill="#f2f2f4" />
<path d="M688.9,955.4 V968.8" fill="none" stroke="#f2f2f4" stroke-width="1.3" stroke-linecap="round" stroke-linejoin="round"/>
<rect x="687.30" y="962.00" width="3.20" height="5.20" fill="#1f1f21" rx="1.6" stroke="#f2f2f4" stroke-width="1.2" />
<path d="M695.2,955.4 V968.8" fill="none" stroke="#f2f2f4" stroke-width="1.3" stroke-linecap="round" stroke-linejoin="round"/>
<rect x="693.60" y="957.00" width="3.20" height="5.20" fill="#1f1f21" rx="1.6" stroke="#f2f2f4" stroke-width="1.2" />
<path d="M701.5,955.4 V968.8" fill="none" stroke="#f2f2f4" stroke-width="1.3" stroke-linecap="round" stroke-linejoin="round"/>
<rect x="699.90" y="962.00" width="3.20" height="5.20" fill="#1f1f21" rx="1.6" stroke="#f2f2f4" stroke-width="1.2" />
<rect x="1262.80" y="954.70" width="19.10" height="15.40" fill="#f2f2f4" rx="2.8" />
<rect x="1267.10" y="961.00" width="0.80" height="9.10" fill="#1f1f21" />
<rect x="1266.15" y="954.70" width="2.70" height="9.20" fill="#1f1f21" rx="0.9" />
<rect x="1266.15" y="954.70" width="2.70" height="4.00" fill="#1f1f21" />
<rect x="1272.00" y="961.00" width="0.80" height="9.10" fill="#1f1f21" />
<rect x="1271.05" y="954.70" width="2.70" height="9.20" fill="#1f1f21" rx="0.9" />
<rect x="1271.05" y="954.70" width="2.70" height="4.00" fill="#1f1f21" />
<rect x="1276.60" y="961.00" width="0.80" height="9.10" fill="#1f1f21" />
<rect x="1275.65" y="954.70" width="2.70" height="9.20" fill="#1f1f21" rx="0.9" />
<rect x="1275.65" y="954.70" width="2.70" height="4.00" fill="#1f1f21" />
<rect x="1103.00" y="17.00" width="2.40" height="192.80" fill="#8e8e8e" />
<text x="393.40" y="1043.70" font-size="27.5" fill="#000" textLength="204.80" lengthAdjust="spacing" >Taste „Editoren“</text>
<rect x="606.20" y="977.20" width="2.60" height="58.10" fill="#8a8a8a" />
<text x="795.80" y="1043.70" font-size="27.5" fill="#000" textLength="216.80" lengthAdjust="spacing" >Pianorolleneditor</text>
<rect x="788.10" y="915.40" width="2.40" height="120.00" fill="#8e8e8e" />
</svg>
</body></html>
